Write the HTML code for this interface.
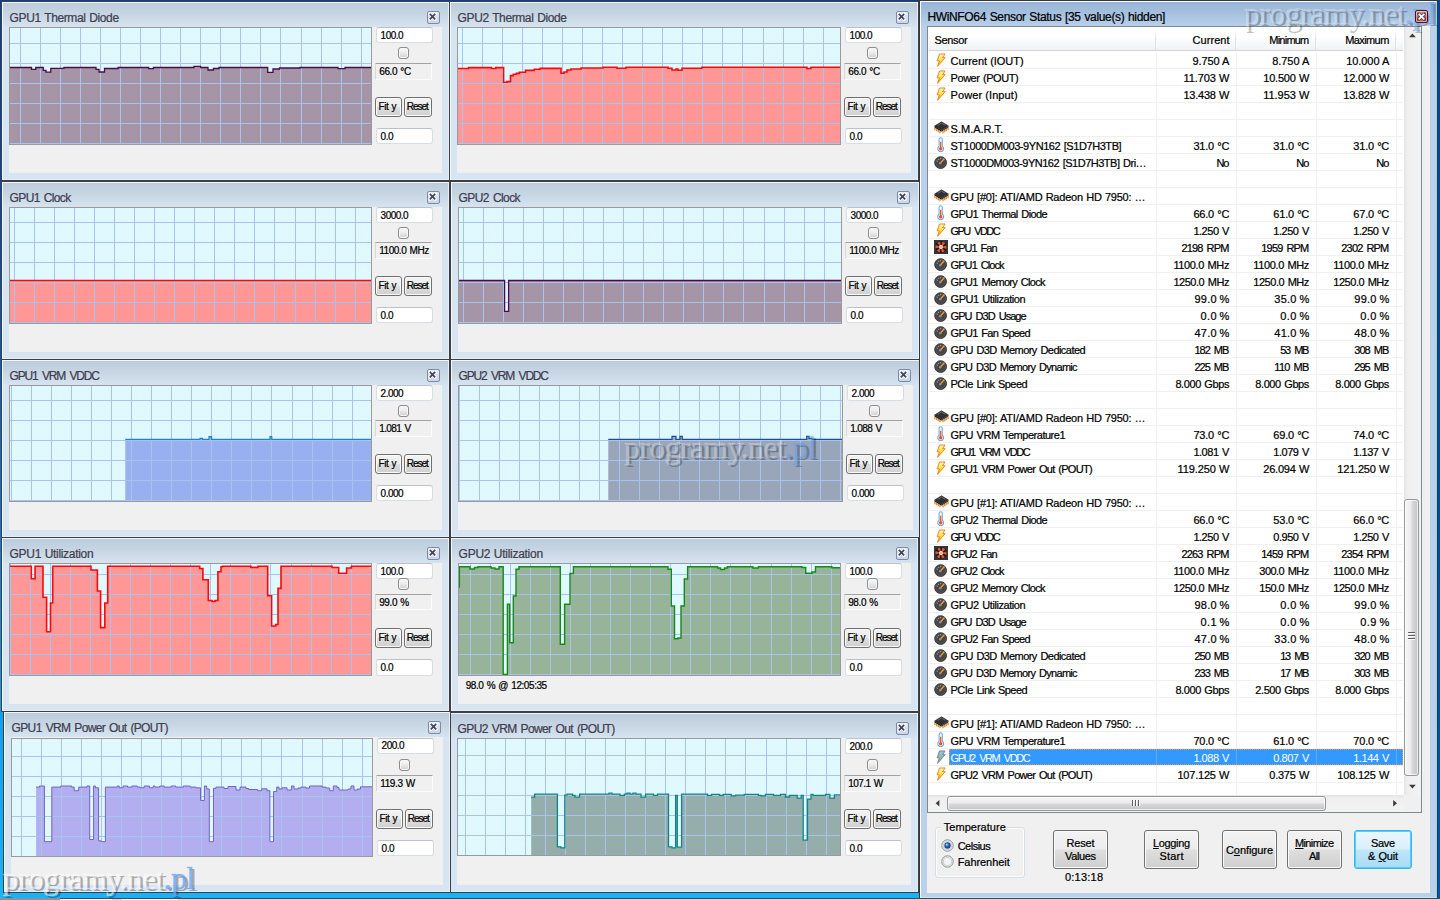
<!DOCTYPE html>
<html lang="en"><head><meta charset="utf-8"><title>HWiNFO64 Sensor Status</title>
<style>
html,body{margin:0;padding:0}
body{width:1440px;height:900px;overflow:hidden;position:relative;font-family:"Liberation Sans",sans-serif;
 background:linear-gradient(180deg,#0a3f9a 0px,#0b4bb0 250px,#0f74da 520px,#12a0f2 720px,#18b2f6 890px,#18b2f6 900px)}
.t{position:absolute;white-space:pre;font-family:"Liberation Sans",sans-serif;line-height:16px;-webkit-text-stroke:.22px currentColor}
.a{position:absolute;box-sizing:border-box}
.win{position:absolute;box-sizing:border-box;border:1px solid #3d3f43;background:#d7e4f2}
.win .hl{position:absolute;left:0;top:0;right:0;bottom:0;box-sizing:border-box;border:1px solid #f3f7fb;border-right-color:#e6eef7;border-bottom-color:#e6eef7}
.win .tb{position:absolute;left:1px;right:1px;top:1px;height:25px;background:linear-gradient(180deg,#bbccdc 0,#c7d5e3 42%,#d7e4f2 100%)}
.cli{position:absolute;background:#f0f0f0}
.cb{position:absolute;box-sizing:border-box;width:13px;height:13px;border:1px solid #7f8aab;border-radius:2px;background:linear-gradient(180deg,#e4ebf5,#c9d5e6)}
.cb svg{position:absolute;left:0;top:0}
.gr{position:absolute;box-sizing:border-box;border:1px solid #9a9a9c;background:#e0f8ff;overflow:hidden}
.inp{position:absolute;box-sizing:border-box;background:#fff;border:1px solid #d6dde7;border-top-color:#bcc2cd;border-radius:3px}
.val{position:absolute;box-sizing:border-box;background:#f0f0f0;border:1px solid #fafcff;border-top-color:#a3a3a3;border-left-color:#d9d9d9;border-radius:1px}
.chk{position:absolute;box-sizing:border-box;border:1px solid #8a8c8e;border-radius:3px;background:linear-gradient(180deg,#f6f6f6 0,#efefef 40%,#cfcfcf 100%);box-shadow:inset 0 0 0 1px #f8f8f8}
.btn{position:absolute;box-sizing:border-box;border:1px solid #707070;border-radius:3px;background:linear-gradient(180deg,#f3f3f3 0,#ececec 48%,#dedede 52%,#cfcfcf 100%);box-shadow:inset 0 0 0 1px #fbfbfb}
.btn.def{border-color:#3cb4ee;background:linear-gradient(180deg,#ecf6fd 0,#d9f0fc 48%,#bfe6fa 52%,#a9dbf6 100%);box-shadow:inset 0 0 0 1px #4fd0fb}
u{text-decoration:underline;text-underline-offset:1px}
.wm{position:absolute;font-family:"Liberation Serif",serif;white-space:pre}
</style></head><body>
<svg width="0" height="0" style="position:absolute"><defs>
<linearGradient id="gb" x1="0" y1="0" x2="0" y2="1"><stop offset="0" stop-color="#fffac8"/><stop offset=".5" stop-color="#ffe534"/><stop offset="1" stop-color="#f9a31a"/></linearGradient>
<symbol id="bolt" viewBox="0 0 12 16"><path d="M4.2 .8 L10.8 .8 L8 5.2 L11 5.2 L1.8 15.6 L4.2 9 L1.4 9 Z" fill="url(#gb)" stroke="#ee7414" stroke-width="1.05" stroke-linejoin="round"/></symbol>
<symbol id="bolts" viewBox="0 0 12 16"><path d="M4.2 .8 L10.8 .8 L8 5.2 L11 5.2 L1.8 15.6 L4.2 9 L1.4 9 Z" fill="url(#gb)" stroke="#ee7414" stroke-width="1.05" stroke-linejoin="round"/><path d="M4.2 .8 L10.8 .8 L8 5.2 L11 5.2 L1.8 15.6 L4.2 9 L1.4 9 Z" fill="#3399ff" fill-opacity=".55" stroke="#3399ff" stroke-opacity=".55" stroke-width="1.05" stroke-linejoin="round"/></symbol>
<symbol id="chip" viewBox="0 0 16 14"><path d="M1 7.2 v2.6 M2.8 8.3 v2.6 M4.6 9.4 v2.6 M6.4 10.5 v2.6 M9.6 10.5 v2.6 M11.4 9.4 v2.6 M13.2 8.3 v2.6 M15 7.2 v2.6" stroke="#f28a22" stroke-width="1.4"/><path d="M8 .8 L15.4 5.3 L8 9.8 L.6 5.3 Z" fill="#303030" stroke="#1c1c1c" stroke-width=".6"/><path d="M.6 5.3 L8 9.8 L8 11.4 L.6 6.9 Z" fill="#1e1e1e"/><path d="M15.4 5.3 L8 9.8 L8 11.4 L15.4 6.9 Z" fill="#3c3c3c"/><path d="M4 4.6 L8 2.2 L12 4.6" stroke="#7d7d7d" stroke-width=".8" fill="none"/></symbol>
<symbol id="therm" viewBox="0 0 10 16"><path d="M3.3 2.4 a1.7 1.7 0 0 1 3.4 0 V9.8 a3.1 3.1 0 1 1 -3.4 0 Z" fill="#fbfdff" stroke="#6ea5df" stroke-width="1.1"/><circle cx="5" cy="12.4" r="1.9" fill="#f2561a"/><rect x="4.3" y="5" width="1.4" height="7" fill="#f2561a"/></symbol>
<symbol id="gauge" viewBox="0 0 14 14"><circle cx="7" cy="7" r="6.3" fill="#454545" stroke="#2a2a2a" stroke-width=".9"/><circle cx="7" cy="7" r="5" fill="none" stroke="#5c5c5c" stroke-width=".8"/><path d="M3 5.2 l.9 .5 M4.6 3.2 l.6 .8 M7 2.4 v1 " stroke="#d8d8d8" stroke-width=".9"/><path d="M6.6 7.6 L10.6 3.2" stroke="#f39a32" stroke-width="1.5" stroke-linecap="round"/><circle cx="6.6" cy="7.6" r="1.3" fill="#8c8c8c"/></symbol>
<symbol id="fan" viewBox="0 0 14 14"><rect x=".4" y=".4" width="13.2" height="13.2" fill="#33343c" stroke="#23242a" stroke-width=".8"/><circle cx="7" cy="7" r="5.9" fill="#15151a"/><g fill="#d9582d"><path d="M7 7 L3.2 2.9 A5.6 5.6 0 0 1 6.2 1.5 Z"/><path d="M7 7 L8.4 1.6 A5.6 5.6 0 0 1 11.4 3.5 Z"/><path d="M7 7 L12.4 5.4 A5.6 5.6 0 0 1 12.3 9 Z"/><path d="M7 7 L10.9 11 A5.6 5.6 0 0 1 7.8 12.5 Z"/><path d="M7 7 L5.6 12.4 A5.6 5.6 0 0 1 2.7 10.6 Z"/><path d="M7 7 L1.6 8.6 A5.6 5.6 0 0 1 1.7 5 Z"/></g><circle cx="7" cy="7" r="1.9" fill="#f6f2f2"/><circle cx="7" cy="7" r=".7" fill="#e8473a"/></symbol>
<symbol id="xx" viewBox="0 0 13 13"><path d="M3.5 3.6 L9.5 9.6 M9.5 3.6 L3.5 9.6" stroke="#fff" stroke-width="4" stroke-linecap="round"/><path d="M3.3 3.4 L9.7 9.8 M9.7 3.4 L3.3 9.8" stroke="#3f455c" stroke-width="2.1" stroke-linecap="butt"/></symbol>
</defs></svg>

<div class="win" style="left:1px;top:1px;width:449px;height:180px"><div class="tb"></div><div class="hl"></div></div>
<div class="cli" style="left:9px;top:27px;width:433px;height:146px"></div>
<span class="t" style="left:9.60px;top:10px;font-size:12px;letter-spacing:-0.385px;word-spacing:0.769px;color:#3e3d4e;">GPU1 Thermal Diode</span>
<div class="cb" style="left:427px;top:11px"><svg width="11" height="11" viewBox="1 1 11 11"><use href="#xx"/></svg></div>
<div class="gr" style="left:9px;top:27px;width:363px;height:118px"><svg width="361" height="116" viewBox="10 28 361 116" style="position:absolute;left:0;top:0"><path d="M10.0 67.5 L31.5 67.5 L31.5 69.3 L35.8 69.3 L35.8 67.5 L43.3 67.5 L43.3 70.3 L46.0 70.3 L46.0 72.2 L50.8 72.2 L50.8 68.3 L64.0 68.3 L64.0 67.5 L91.0 67.5 L91.0 67.5 L96.0 67.5 L96.0 69.3 L99.0 69.3 L99.0 72.0 L104.5 72.0 L104.5 68.5 L118.0 68.5 L118.0 67.5 L148.6 67.5 L148.6 68.6 L153.4 68.6 L153.4 67.5 L194.0 67.5 L194.0 66.3 L200.6 66.3 L200.6 67.5 L208.0 67.5 L208.0 70.0 L213.4 70.0 L213.4 68.5 L219.0 68.5 L219.0 67.5 L267.7 67.5 L267.7 72.3 L273.0 72.3 L273.0 69.0 L279.5 69.0 L279.5 68.0 L300.0 68.0 L300.0 67.5 L338.0 67.5 L338.0 68.6 L345.0 68.6 L345.0 67.5 L372.0 67.5 L372.0 145.0 L10.0 145.0 Z" fill="#a595a7"/><path d="M20.5 28V144M40.5 28V144M60.5 28V144M80.5 28V144M100.5 28V144M120.5 28V144M140.5 28V144M160.5 28V144M180.5 28V144M200.5 28V144M220.5 28V144M240.5 28V144M260.5 28V144M280.5 28V144M301.5 28V144M321.5 28V144M341.5 28V144M361.5 28V144M10 43.5H371M10 63.5H371M10 83.5H371M10 103.5H371M10 123.5H371M10 143.5H371" stroke="#a7c3ee" stroke-width="1" fill="none" shape-rendering="crispEdges"/><path d="M10.0 67.5 L31.5 67.5 L31.5 69.3 L35.8 69.3 L35.8 67.5 L43.3 67.5 L43.3 70.3 L46.0 70.3 L46.0 72.2 L50.8 72.2 L50.8 68.3 L64.0 68.3 L64.0 67.5 L91.0 67.5 L91.0 67.5 L96.0 67.5 L96.0 69.3 L99.0 69.3 L99.0 72.0 L104.5 72.0 L104.5 68.5 L118.0 68.5 L118.0 67.5 L148.6 67.5 L148.6 68.6 L153.4 68.6 L153.4 67.5 L194.0 67.5 L194.0 66.3 L200.6 66.3 L200.6 67.5 L208.0 67.5 L208.0 70.0 L213.4 70.0 L213.4 68.5 L219.0 68.5 L219.0 67.5 L267.7 67.5 L267.7 72.3 L273.0 72.3 L273.0 69.0 L279.5 69.0 L279.5 68.0 L300.0 68.0 L300.0 67.5 L338.0 67.5 L338.0 68.6 L345.0 68.6 L345.0 67.5 L372.0 67.5" fill="none" stroke="#4b0a4b" stroke-width="1.3" stroke-linejoin="miter"/></svg></div>
<div class="inp" style="left:375.5px;top:27.3px;width:57.5px;height:16px"></div>
<span class="t" style="left:380.60px;top:28px;font-size:10px;letter-spacing:-0.508px;word-spacing:1.016px;color:#000;">100.0</span>
<div class="chk" style="left:398px;top:47px;width:11px;height:12px"></div>
<div class="val" style="left:374.5px;top:63px;width:57px;height:17px"></div>
<span class="t" style="left:379.20px;top:64px;font-size:10px;letter-spacing:-0.367px;word-spacing:0.734px;color:#000;">66.0 °C</span>
<div class="btn" style="left:375px;top:97px;width:27px;height:20px"></div>
<span class="t" style="left:378.50px;top:99px;font-size:10px;letter-spacing:-0.445px;word-spacing:0.891px;color:#000;">Fit y</span>
<div class="btn" style="left:404px;top:97px;width:28px;height:20px"></div>
<span class="t" style="left:406.70px;top:99px;font-size:10px;letter-spacing:-1.031px;word-spacing:2.062px;color:#000;">Reset</span>
<div class="inp" style="left:375.5px;top:128px;width:57.5px;height:16.3px"></div>
<span class="t" style="left:380.60px;top:129px;font-size:10px;letter-spacing:-0.453px;word-spacing:0.906px;color:#000;">0.0</span>
<div class="win" style="left:449px;top:1px;width:470px;height:180px"><div class="tb"></div><div class="hl"></div></div>
<div class="cli" style="left:457px;top:27px;width:454px;height:146px"></div>
<span class="t" style="left:457.60px;top:10px;font-size:12px;letter-spacing:-0.400px;word-spacing:0.800px;color:#3e3d4e;">GPU2 Thermal Diode</span>
<div class="cb" style="left:896px;top:11px"><svg width="11" height="11" viewBox="1 1 11 11"><use href="#xx"/></svg></div>
<div class="gr" style="left:457px;top:27px;width:384px;height:118px"><svg width="382" height="116" viewBox="458 28 382 116" style="position:absolute;left:0;top:0"><path d="M458.0 68.5 L468.6 68.5 L468.6 67.6 L491.4 67.6 L491.4 68.5 L495.8 68.5 L495.8 67.6 L503.6 67.6 L503.6 82.3 L507.0 82.3 L507.0 81.6 L510.5 81.6 L510.5 75.6 L513.3 75.6 L513.3 74.3 L516.4 74.3 L516.4 73.4 L519.3 73.4 L519.3 72.3 L525.5 72.3 L525.5 70.4 L534.3 70.4 L534.3 69.3 L540.2 69.3 L540.2 68.4 L558.0 68.4 L558.0 68.3 L561.0 68.3 L561.0 73.3 L564.0 73.3 L564.0 72.0 L567.0 72.0 L567.0 70.0 L571.0 70.0 L571.0 69.0 L581.0 69.0 L581.0 68.0 L603.0 68.0 L603.0 67.3 L617.0 67.3 L617.0 68.3 L626.0 68.3 L626.0 67.3 L668.0 67.3 L668.0 68.3 L672.0 68.3 L672.0 70.0 L676.0 70.0 L676.0 69.0 L678.0 69.0 L678.0 70.3 L682.0 70.3 L682.0 68.3 L702.0 68.3 L702.0 67.3 L807.0 67.3 L807.0 68.5 L811.0 68.5 L811.0 67.3 L841.0 67.3 L841.0 145.0 L458.0 145.0 Z" fill="#ff9797"/><path d="M462.5 28V144M482.5 28V144M502.5 28V144M522.5 28V144M542.5 28V144M562.5 28V144M582.5 28V144M602.5 28V144M622.5 28V144M642.5 28V144M662.5 28V144M682.5 28V144M702.5 28V144M722.5 28V144M742.5 28V144M763.5 28V144M783.5 28V144M803.5 28V144M823.5 28V144M458 43.5H840M458 63.5H840M458 83.5H840M458 103.5H840M458 123.5H840M458 143.5H840" stroke="#a7c3ee" stroke-width="1" fill="none" shape-rendering="crispEdges"/><path d="M458.0 68.5 L468.6 68.5 L468.6 67.6 L491.4 67.6 L491.4 68.5 L495.8 68.5 L495.8 67.6 L503.6 67.6 L503.6 82.3 L507.0 82.3 L507.0 81.6 L510.5 81.6 L510.5 75.6 L513.3 75.6 L513.3 74.3 L516.4 74.3 L516.4 73.4 L519.3 73.4 L519.3 72.3 L525.5 72.3 L525.5 70.4 L534.3 70.4 L534.3 69.3 L540.2 69.3 L540.2 68.4 L558.0 68.4 L558.0 68.3 L561.0 68.3 L561.0 73.3 L564.0 73.3 L564.0 72.0 L567.0 72.0 L567.0 70.0 L571.0 70.0 L571.0 69.0 L581.0 69.0 L581.0 68.0 L603.0 68.0 L603.0 67.3 L617.0 67.3 L617.0 68.3 L626.0 68.3 L626.0 67.3 L668.0 67.3 L668.0 68.3 L672.0 68.3 L672.0 70.0 L676.0 70.0 L676.0 69.0 L678.0 69.0 L678.0 70.3 L682.0 70.3 L682.0 68.3 L702.0 68.3 L702.0 67.3 L807.0 67.3 L807.0 68.5 L811.0 68.5 L811.0 67.3 L841.0 67.3" fill="none" stroke="#fb0808" stroke-width="1.6" stroke-linejoin="miter"/></svg></div>
<div class="inp" style="left:844.5px;top:27.3px;width:57.5px;height:16px"></div>
<span class="t" style="left:849.60px;top:28px;font-size:10px;letter-spacing:-0.508px;word-spacing:1.016px;color:#000;">100.0</span>
<div class="chk" style="left:867px;top:47px;width:11px;height:12px"></div>
<div class="val" style="left:843.5px;top:63px;width:57px;height:17px"></div>
<span class="t" style="left:848.20px;top:64px;font-size:10px;letter-spacing:-0.367px;word-spacing:0.734px;color:#000;">66.0 °C</span>
<div class="btn" style="left:844px;top:97px;width:27px;height:20px"></div>
<span class="t" style="left:847.50px;top:99px;font-size:10px;letter-spacing:-0.445px;word-spacing:0.891px;color:#000;">Fit y</span>
<div class="btn" style="left:873px;top:97px;width:28px;height:20px"></div>
<span class="t" style="left:875.70px;top:99px;font-size:10px;letter-spacing:-1.031px;word-spacing:2.062px;color:#000;">Reset</span>
<div class="inp" style="left:844.5px;top:128px;width:57.5px;height:16.3px"></div>
<span class="t" style="left:849.60px;top:129px;font-size:10px;letter-spacing:-0.453px;word-spacing:0.906px;color:#000;">0.0</span>
<div class="win" style="left:1px;top:181px;width:449px;height:179px"><div class="tb"></div><div class="hl"></div></div>
<div class="cli" style="left:9px;top:207px;width:433px;height:145px"></div>
<span class="t" style="left:9.60px;top:190px;font-size:12px;letter-spacing:-0.633px;word-spacing:1.266px;color:#3e3d4e;">GPU1 Clock</span>
<div class="cb" style="left:427px;top:191px"><svg width="11" height="11" viewBox="1 1 11 11"><use href="#xx"/></svg></div>
<div class="gr" style="left:9px;top:207px;width:363px;height:117px"><svg width="361" height="115" viewBox="10 208 361 115" style="position:absolute;left:0;top:0"><path d="M10.0 280.5 L372.0 280.5 L372.0 324.0 L10.0 324.0 Z" fill="#ff9797"/><path d="M14.5 208V323M34.5 208V323M54.5 208V323M74.5 208V323M94.5 208V323M114.5 208V323M134.5 208V323M154.5 208V323M174.5 208V323M194.5 208V323M214.5 208V323M234.5 208V323M254.5 208V323M274.5 208V323M295.5 208V323M315.5 208V323M335.5 208V323M355.5 208V323M10 222.5H371M10 242.5H371M10 262.5H371M10 282.5H371M10 302.5H371M10 322.5H371" stroke="#a7c3ee" stroke-width="1" fill="none" shape-rendering="crispEdges"/><path d="M10.0 280.5 L372.0 280.5" fill="none" stroke="#fb0808" stroke-width="1.6" stroke-linejoin="miter"/></svg></div>
<div class="inp" style="left:375.5px;top:207.2px;width:57.5px;height:16px"></div>
<span class="t" style="left:380.60px;top:208px;font-size:10px;letter-spacing:-0.519px;word-spacing:1.038px;color:#000;">3000.0</span>
<div class="chk" style="left:398px;top:226.5px;width:11px;height:12px"></div>
<div class="val" style="left:374.5px;top:242px;width:57px;height:17px"></div>
<span class="t" style="left:379.20px;top:243px;font-size:10px;letter-spacing:-0.455px;word-spacing:0.911px;color:#000;">1100.0 MHz</span>
<div class="btn" style="left:375px;top:276.3px;width:27px;height:20px"></div>
<span class="t" style="left:378.50px;top:278px;font-size:10px;letter-spacing:-0.445px;word-spacing:0.891px;color:#000;">Fit y</span>
<div class="btn" style="left:404px;top:276.3px;width:28px;height:20px"></div>
<span class="t" style="left:406.70px;top:278px;font-size:10px;letter-spacing:-1.031px;word-spacing:2.062px;color:#000;">Reset</span>
<div class="inp" style="left:375.5px;top:307px;width:57.5px;height:16.3px"></div>
<span class="t" style="left:380.60px;top:308px;font-size:10px;letter-spacing:-0.453px;word-spacing:0.906px;color:#000;">0.0</span>
<div class="win" style="left:450px;top:181px;width:470px;height:179px"><div class="tb"></div><div class="hl"></div></div>
<div class="cli" style="left:458px;top:207px;width:454px;height:145px"></div>
<span class="t" style="left:458.60px;top:190px;font-size:12px;letter-spacing:-0.576px;word-spacing:1.152px;color:#3e3d4e;">GPU2 Clock</span>
<div class="cb" style="left:897px;top:191px"><svg width="11" height="11" viewBox="1 1 11 11"><use href="#xx"/></svg></div>
<div class="gr" style="left:458px;top:207px;width:384px;height:117px"><svg width="382" height="115" viewBox="459 208 382 115" style="position:absolute;left:0;top:0"><path d="M459.0 280.5 L504.6 280.5 L504.6 311.3 L508.6 311.3 L508.6 280.5 L842.0 280.5 L842.0 324.0 L459.0 324.0 Z" fill="#a595a7"/><path d="M463.5 208V323M483.5 208V323M503.5 208V323M523.5 208V323M543.5 208V323M563.5 208V323M583.5 208V323M603.5 208V323M623.5 208V323M643.5 208V323M663.5 208V323M683.5 208V323M703.5 208V323M723.5 208V323M743.5 208V323M764.5 208V323M784.5 208V323M804.5 208V323M824.5 208V323M459 222.5H841M459 242.5H841M459 262.5H841M459 282.5H841M459 302.5H841M459 322.5H841" stroke="#a7c3ee" stroke-width="1" fill="none" shape-rendering="crispEdges"/><path d="M459.0 280.5 L504.6 280.5 L504.6 311.3 L508.6 311.3 L508.6 280.5 L842.0 280.5" fill="none" stroke="#4b0a4b" stroke-width="1.3" stroke-linejoin="miter"/></svg></div>
<div class="inp" style="left:845.5px;top:207.2px;width:57.5px;height:16px"></div>
<span class="t" style="left:850.60px;top:208px;font-size:10px;letter-spacing:-0.519px;word-spacing:1.038px;color:#000;">3000.0</span>
<div class="chk" style="left:868px;top:226.5px;width:11px;height:12px"></div>
<div class="val" style="left:844.5px;top:242px;width:57px;height:17px"></div>
<span class="t" style="left:849.20px;top:243px;font-size:10px;letter-spacing:-0.455px;word-spacing:0.911px;color:#000;">1100.0 MHz</span>
<div class="btn" style="left:845px;top:276.3px;width:27px;height:20px"></div>
<span class="t" style="left:848.50px;top:278px;font-size:10px;letter-spacing:-0.445px;word-spacing:0.891px;color:#000;">Fit y</span>
<div class="btn" style="left:874px;top:276.3px;width:28px;height:20px"></div>
<span class="t" style="left:876.70px;top:278px;font-size:10px;letter-spacing:-1.031px;word-spacing:2.062px;color:#000;">Reset</span>
<div class="inp" style="left:845.5px;top:307px;width:57.5px;height:16.3px"></div>
<span class="t" style="left:850.60px;top:308px;font-size:10px;letter-spacing:-0.453px;word-spacing:0.906px;color:#000;">0.0</span>
<div class="win" style="left:1px;top:359px;width:449px;height:179px"><div class="tb"></div><div class="hl"></div></div>
<div class="cli" style="left:9px;top:385px;width:433px;height:145px"></div>
<span class="t" style="left:9.60px;top:368px;font-size:12px;letter-spacing:-1.227px;word-spacing:2.454px;color:#3e3d4e;">GPU1 VRM VDDC</span>
<div class="cb" style="left:427px;top:369px"><svg width="11" height="11" viewBox="1 1 11 11"><use href="#xx"/></svg></div>
<div class="gr" style="left:9px;top:385px;width:363px;height:117px"><svg width="361" height="115" viewBox="10 386 361 115" style="position:absolute;left:0;top:0"><path d="M125.3 439.4 L200.0 439.4 L200.0 438.4 L202.5 438.4 L202.5 439.4 L209.0 439.4 L209.0 436.6 L211.6 436.6 L211.6 439.4 L270.0 439.4 L270.0 436.6 L271.8 436.6 L271.8 439.4 L372.0 439.4 L372.0 502.0 L125.3 502.0 Z" fill="#98aff0"/><path d="M11.5 386V501M31.5 386V501M51.5 386V501M71.5 386V501M91.5 386V501M111.5 386V501M131.5 386V501M151.5 386V501M171.5 386V501M191.5 386V501M211.5 386V501M231.5 386V501M251.5 386V501M271.5 386V501M292.5 386V501M312.5 386V501M332.5 386V501M352.5 386V501M10 400.5H371M10 420.5H371M10 440.5H371M10 460.5H371M10 480.5H371M10 500.5H371" stroke="#a7c3ee" stroke-width="1" fill="none" shape-rendering="crispEdges"/><path d="M125.3 439.4 L200.0 439.4 L200.0 438.4 L202.5 438.4 L202.5 439.4 L209.0 439.4 L209.0 436.6 L211.6 436.6 L211.6 439.4 L270.0 439.4 L270.0 436.6 L271.8 436.6 L271.8 439.4 L372.0 439.4" fill="none" stroke="#1f86c4" stroke-width="1.2" stroke-linejoin="miter"/></svg></div>
<div class="inp" style="left:375.5px;top:385.2px;width:57.5px;height:16px"></div>
<span class="t" style="left:380.60px;top:386px;font-size:10px;letter-spacing:-0.508px;word-spacing:1.016px;color:#000;">2.000</span>
<div class="chk" style="left:398px;top:404.5px;width:11px;height:12px"></div>
<div class="val" style="left:374.5px;top:420px;width:57px;height:17px"></div>
<span class="t" style="left:379.20px;top:421px;font-size:10px;letter-spacing:-0.621px;word-spacing:1.242px;color:#000;">1.081 V</span>
<div class="btn" style="left:375px;top:454.3px;width:27px;height:20px"></div>
<span class="t" style="left:378.50px;top:456px;font-size:10px;letter-spacing:-0.445px;word-spacing:0.891px;color:#000;">Fit y</span>
<div class="btn" style="left:404px;top:454.3px;width:28px;height:20px"></div>
<span class="t" style="left:406.70px;top:456px;font-size:10px;letter-spacing:-1.031px;word-spacing:2.062px;color:#000;">Reset</span>
<div class="inp" style="left:375.5px;top:485px;width:57.5px;height:16.3px"></div>
<span class="t" style="left:380.60px;top:486px;font-size:10px;letter-spacing:-0.508px;word-spacing:1.016px;color:#000;">0.000</span>
<div class="win" style="left:450px;top:359px;width:471px;height:179px"><div class="tb"></div><div class="hl"></div></div>
<div class="cli" style="left:458px;top:385px;width:455px;height:145px"></div>
<span class="t" style="left:458.60px;top:368px;font-size:12px;letter-spacing:-1.202px;word-spacing:2.404px;color:#3e3d4e;">GPU2 VRM VDDC</span>
<div class="cb" style="left:898px;top:369px"><svg width="11" height="11" viewBox="1 1 11 11"><use href="#xx"/></svg></div>
<div class="gr" style="left:458px;top:385px;width:385px;height:117px"><svg width="383" height="115" viewBox="459 386 383 115" style="position:absolute;left:0;top:0"><path d="M608.3 439.3 L672.0 439.3 L672.0 436.4 L676.0 436.4 L676.0 439.3 L680.0 439.3 L680.0 436.4 L682.3 436.4 L682.3 439.3 L806.7 439.3 L806.7 436.4 L809.0 436.4 L809.0 438.3 L812.0 438.3 L812.0 439.3 L843.0 439.3 L843.0 502.0 L608.3 502.0 Z" fill="#99a5b9"/><path d="M459.5 386V501M479.5 386V501M499.5 386V501M519.5 386V501M539.5 386V501M559.5 386V501M579.5 386V501M599.5 386V501M619.5 386V501M639.5 386V501M659.5 386V501M679.5 386V501M699.5 386V501M719.5 386V501M739.5 386V501M760.5 386V501M780.5 386V501M800.5 386V501M820.5 386V501M840.5 386V501M459 400.5H842M459 420.5H842M459 440.5H842M459 460.5H842M459 480.5H842M459 500.5H842" stroke="#a7c3ee" stroke-width="1" fill="none" shape-rendering="crispEdges"/><path d="M608.3 439.3 L672.0 439.3 L672.0 436.4 L676.0 436.4 L676.0 439.3 L680.0 439.3 L680.0 436.4 L682.3 436.4 L682.3 439.3 L806.7 439.3 L806.7 436.4 L809.0 436.4 L809.0 438.3 L812.0 438.3 L812.0 439.3 L843.0 439.3" fill="none" stroke="#1c4f93" stroke-width="1.2" stroke-linejoin="miter"/></svg></div>
<div class="inp" style="left:846.5px;top:385.2px;width:57.5px;height:16px"></div>
<span class="t" style="left:851.60px;top:386px;font-size:10px;letter-spacing:-0.508px;word-spacing:1.016px;color:#000;">2.000</span>
<div class="chk" style="left:869px;top:404.5px;width:11px;height:12px"></div>
<div class="val" style="left:845.5px;top:420px;width:57px;height:17px"></div>
<span class="t" style="left:850.20px;top:421px;font-size:10px;letter-spacing:-0.621px;word-spacing:1.242px;color:#000;">1.088 V</span>
<div class="btn" style="left:846px;top:454.3px;width:27px;height:20px"></div>
<span class="t" style="left:849.50px;top:456px;font-size:10px;letter-spacing:-0.445px;word-spacing:0.891px;color:#000;">Fit y</span>
<div class="btn" style="left:875px;top:454.3px;width:28px;height:20px"></div>
<span class="t" style="left:877.70px;top:456px;font-size:10px;letter-spacing:-1.031px;word-spacing:2.062px;color:#000;">Reset</span>
<div class="inp" style="left:846.5px;top:485px;width:57.5px;height:16.3px"></div>
<span class="t" style="left:851.60px;top:486px;font-size:10px;letter-spacing:-0.508px;word-spacing:1.016px;color:#000;">0.000</span>
<div class="win" style="left:1px;top:537px;width:449px;height:175px"><div class="tb"></div><div class="hl"></div></div>
<div class="cli" style="left:9px;top:563px;width:433px;height:141px"></div>
<span class="t" style="left:9.60px;top:546px;font-size:12px;letter-spacing:-0.310px;word-spacing:0.620px;color:#3e3d4e;">GPU1 Utilization</span>
<div class="cb" style="left:427px;top:547px"><svg width="11" height="11" viewBox="1 1 11 11"><use href="#xx"/></svg></div>
<div class="gr" style="left:9px;top:563px;width:363px;height:113px"><svg width="361" height="111" viewBox="10 564 361 111" style="position:absolute;left:0;top:0"><path d="M10.0 566.3 L31.3 566.3 L31.3 578.8 L35.1 578.8 L35.1 566.3 L43.0 566.3 L43.0 597.3 L46.6 597.3 L46.6 631.8 L50.5 631.8 L50.5 603.0 L52.7 603.0 L52.7 566.3 L91.0 566.3 L91.0 570.0 L97.4 570.0 L97.4 591.0 L100.6 591.0 L100.6 627.6 L104.8 627.6 L104.8 603.0 L107.7 603.0 L107.7 566.3 L199.7 566.3 L199.7 568.5 L202.9 568.5 L202.9 579.7 L208.3 579.7 L208.3 600.5 L212.0 600.5 L212.0 601.5 L215.0 601.5 L215.0 600.5 L217.9 600.5 L217.9 571.7 L221.0 571.7 L221.0 566.8 L222.5 566.8 L222.5 566.3 L250.8 566.3 L250.8 567.4 L258.0 567.4 L258.0 566.3 L267.7 566.3 L267.7 595.7 L271.6 595.7 L271.6 626.0 L275.7 626.0 L275.7 624.5 L278.0 624.5 L278.0 588.4 L281.0 588.4 L281.0 566.3 L332.0 566.3 L332.0 567.5 L338.7 567.5 L338.7 573.3 L346.6 573.3 L346.6 568.0 L351.4 568.0 L351.4 566.3 L372.0 566.3 L372.0 676.0 L10.0 676.0 Z" fill="#ff9797"/><path d="M10.5 564V675M30.5 564V675M50.5 564V675M70.5 564V675M90.5 564V675M110.5 564V675M130.5 564V675M150.5 564V675M170.5 564V675M190.5 564V675M210.5 564V675M230.5 564V675M250.5 564V675M270.5 564V675M291.5 564V675M311.5 564V675M331.5 564V675M351.5 564V675M371.5 564V675M10 574.5H371M10 594.5H371M10 614.5H371M10 634.5H371M10 654.5H371M10 674.5H371" stroke="#a7c3ee" stroke-width="1" fill="none" shape-rendering="crispEdges"/><path d="M10.0 566.3 L31.3 566.3 L31.3 578.8 L35.1 578.8 L35.1 566.3 L43.0 566.3 L43.0 597.3 L46.6 597.3 L46.6 631.8 L50.5 631.8 L50.5 603.0 L52.7 603.0 L52.7 566.3 L91.0 566.3 L91.0 570.0 L97.4 570.0 L97.4 591.0 L100.6 591.0 L100.6 627.6 L104.8 627.6 L104.8 603.0 L107.7 603.0 L107.7 566.3 L199.7 566.3 L199.7 568.5 L202.9 568.5 L202.9 579.7 L208.3 579.7 L208.3 600.5 L212.0 600.5 L212.0 601.5 L215.0 601.5 L215.0 600.5 L217.9 600.5 L217.9 571.7 L221.0 571.7 L221.0 566.8 L222.5 566.8 L222.5 566.3 L250.8 566.3 L250.8 567.4 L258.0 567.4 L258.0 566.3 L267.7 566.3 L267.7 595.7 L271.6 595.7 L271.6 626.0 L275.7 626.0 L275.7 624.5 L278.0 624.5 L278.0 588.4 L281.0 588.4 L281.0 566.3 L332.0 566.3 L332.0 567.5 L338.7 567.5 L338.7 573.3 L346.6 573.3 L346.6 568.0 L351.4 568.0 L351.4 566.3 L372.0 566.3" fill="none" stroke="#fb0808" stroke-width="1.6" stroke-linejoin="miter"/></svg></div>
<div class="inp" style="left:375.5px;top:563.4px;width:57.5px;height:16px"></div>
<span class="t" style="left:380.60px;top:564px;font-size:10px;letter-spacing:-0.508px;word-spacing:1.016px;color:#000;">100.0</span>
<div class="chk" style="left:398px;top:578px;width:11px;height:12px"></div>
<div class="val" style="left:374.5px;top:594px;width:57px;height:16px"></div>
<span class="t" style="left:379.20px;top:595px;font-size:10px;letter-spacing:-0.380px;word-spacing:0.760px;color:#000;">99.0 %</span>
<div class="btn" style="left:375px;top:628px;width:27px;height:20px"></div>
<span class="t" style="left:378.50px;top:630px;font-size:10px;letter-spacing:-0.445px;word-spacing:0.891px;color:#000;">Fit y</span>
<div class="btn" style="left:404px;top:628px;width:28px;height:20px"></div>
<span class="t" style="left:406.70px;top:630px;font-size:10px;letter-spacing:-1.031px;word-spacing:2.062px;color:#000;">Reset</span>
<div class="inp" style="left:375.5px;top:659.3px;width:57.5px;height:16.3px"></div>
<span class="t" style="left:380.60px;top:660px;font-size:10px;letter-spacing:-0.453px;word-spacing:0.906px;color:#000;">0.0</span>
<div class="win" style="left:450px;top:537px;width:469px;height:175px"><div class="tb"></div><div class="hl"></div></div>
<div class="cli" style="left:458px;top:563px;width:453px;height:141px"></div>
<span class="t" style="left:458.60px;top:546px;font-size:12px;letter-spacing:-0.272px;word-spacing:0.543px;color:#3e3d4e;">GPU2 Utilization</span>
<div class="cb" style="left:896px;top:547px"><svg width="11" height="11" viewBox="1 1 11 11"><use href="#xx"/></svg></div>
<div class="gr" style="left:458px;top:563px;width:383px;height:113px"><svg width="381" height="111" viewBox="459 564 381 111" style="position:absolute;left:0;top:0"><path d="M458.6 587.0 L459.4 587.0 L459.4 566.7 L470.0 566.7 L470.0 569.0 L474.5 569.0 L474.5 567.5 L478.0 567.5 L478.0 566.7 L491.0 566.7 L491.0 568.0 L495.0 568.0 L495.0 569.0 L499.0 569.0 L499.0 566.7 L503.2 566.7 L503.2 674.4 L507.4 674.4 L507.4 604.2 L509.7 604.2 L509.7 642.7 L513.3 642.7 L513.3 596.0 L516.0 596.0 L516.0 569.3 L519.0 569.3 L519.0 566.7 L560.3 566.7 L560.3 644.3 L564.6 644.3 L564.6 604.2 L570.0 604.2 L570.0 573.5 L573.4 573.5 L573.4 566.7 L668.0 566.7 L668.0 569.3 L671.3 569.3 L671.3 606.0 L674.5 606.0 L674.5 638.8 L678.0 638.8 L678.0 638.0 L681.0 638.0 L681.0 606.0 L684.3 606.0 L684.3 579.0 L687.6 579.0 L687.6 566.7 L717.6 566.7 L717.6 568.0 L720.5 568.0 L720.5 569.5 L724.5 569.5 L724.5 568.0 L727.4 568.0 L727.4 566.7 L752.9 566.7 L752.9 568.0 L758.4 568.0 L758.4 566.7 L802.0 566.7 L802.0 567.5 L805.7 567.5 L805.7 573.2 L812.0 573.2 L812.0 572.0 L815.5 572.0 L815.5 566.7 L831.8 566.7 L831.8 567.8 L841.0 567.8 L841.0 676.0 L458.6 676.0 Z" fill="#98b498"/><path d="M470.5 564V675M490.5 564V675M510.5 564V675M530.5 564V675M550.5 564V675M570.5 564V675M590.5 564V675M610.5 564V675M630.5 564V675M650.5 564V675M670.5 564V675M690.5 564V675M710.5 564V675M730.5 564V675M750.5 564V675M771.5 564V675M791.5 564V675M811.5 564V675M831.5 564V675M459 574.5H840M459 594.5H840M459 614.5H840M459 634.5H840M459 654.5H840M459 674.5H840" stroke="#a7c3ee" stroke-width="1" fill="none" shape-rendering="crispEdges"/><path d="M458.6 587.0 L459.4 587.0 L459.4 566.7 L470.0 566.7 L470.0 569.0 L474.5 569.0 L474.5 567.5 L478.0 567.5 L478.0 566.7 L491.0 566.7 L491.0 568.0 L495.0 568.0 L495.0 569.0 L499.0 569.0 L499.0 566.7 L503.2 566.7 L503.2 674.4 L507.4 674.4 L507.4 604.2 L509.7 604.2 L509.7 642.7 L513.3 642.7 L513.3 596.0 L516.0 596.0 L516.0 569.3 L519.0 569.3 L519.0 566.7 L560.3 566.7 L560.3 644.3 L564.6 644.3 L564.6 604.2 L570.0 604.2 L570.0 573.5 L573.4 573.5 L573.4 566.7 L668.0 566.7 L668.0 569.3 L671.3 569.3 L671.3 606.0 L674.5 606.0 L674.5 638.8 L678.0 638.8 L678.0 638.0 L681.0 638.0 L681.0 606.0 L684.3 606.0 L684.3 579.0 L687.6 579.0 L687.6 566.7 L717.6 566.7 L717.6 568.0 L720.5 568.0 L720.5 569.5 L724.5 569.5 L724.5 568.0 L727.4 568.0 L727.4 566.7 L752.9 566.7 L752.9 568.0 L758.4 568.0 L758.4 566.7 L802.0 566.7 L802.0 567.5 L805.7 567.5 L805.7 573.2 L812.0 573.2 L812.0 572.0 L815.5 572.0 L815.5 566.7 L831.8 566.7 L831.8 567.8 L841.0 567.8" fill="none" stroke="#168a16" stroke-width="1.4" stroke-linejoin="miter"/></svg></div>
<div class="inp" style="left:844.5px;top:563.4px;width:57.5px;height:16px"></div>
<span class="t" style="left:849.60px;top:564px;font-size:10px;letter-spacing:-0.508px;word-spacing:1.016px;color:#000;">100.0</span>
<div class="chk" style="left:867px;top:578px;width:11px;height:12px"></div>
<div class="val" style="left:843.5px;top:594px;width:57px;height:16px"></div>
<span class="t" style="left:848.20px;top:595px;font-size:10px;letter-spacing:-0.380px;word-spacing:0.760px;color:#000;">98.0 %</span>
<div class="btn" style="left:844px;top:628px;width:27px;height:20px"></div>
<span class="t" style="left:847.50px;top:630px;font-size:10px;letter-spacing:-0.445px;word-spacing:0.891px;color:#000;">Fit y</span>
<div class="btn" style="left:873px;top:628px;width:28px;height:20px"></div>
<span class="t" style="left:875.70px;top:630px;font-size:10px;letter-spacing:-1.031px;word-spacing:2.062px;color:#000;">Reset</span>
<div class="inp" style="left:844.5px;top:659.3px;width:57.5px;height:16.3px"></div>
<span class="t" style="left:849.60px;top:660px;font-size:10px;letter-spacing:-0.453px;word-spacing:0.906px;color:#000;">0.0</span>
<span class="t" style="left:465.70px;top:678px;font-size:10px;letter-spacing:-0.428px;word-spacing:0.856px;color:#000;">98.0 % @ 12:05:35</span>
<div class="win" style="left:449px;top:712px;width:470px;height:181px"><div class="tb"></div><div class="hl"></div></div>
<div class="cli" style="left:457px;top:738px;width:454px;height:147px"></div>
<span class="t" style="left:457.60px;top:721px;font-size:12px;letter-spacing:-0.611px;word-spacing:1.222px;color:#3e3d4e;">GPU2 VRM Power Out (POUT)</span>
<div class="cb" style="left:896px;top:722px"><svg width="11" height="11" viewBox="1 1 11 11"><use href="#xx"/></svg></div>
<div class="gr" style="left:457px;top:738.2px;width:384px;height:118px"><svg width="382" height="116" viewBox="458 739.2 382 116" style="position:absolute;left:0;top:0"><path d="M531.2 797.3 L534.6 797.3 L534.6 794.4 L557.4 794.4 L557.4 847.0 L561.0 847.0 L561.0 848.0 L564.8 848.0 L564.8 795.4 L567.0 795.4 L567.0 794.4 L572.5 794.4 L572.5 795.5 L575.0 795.5 L575.0 797.3 L579.6 797.3 L579.6 794.4 L609.0 794.4 L609.0 793.4 L612.0 793.4 L612.0 794.4 L620.0 794.4 L620.0 795.5 L624.4 795.5 L624.4 794.4 L627.0 794.4 L627.0 793.4 L630.0 793.4 L630.0 794.4 L633.0 794.4 L633.0 793.4 L636.0 793.4 L636.0 794.4 L641.0 794.4 L641.0 797.3 L645.6 797.3 L645.6 794.4 L653.5 794.4 L653.5 795.5 L657.5 795.5 L657.5 794.4 L668.5 794.4 L668.5 847.0 L672.0 847.0 L672.0 848.0 L675.6 848.0 L675.6 795.5 L677.3 795.5 L677.3 847.4 L681.6 847.4 L681.6 794.4 L707.5 794.4 L707.5 795.6 L711.6 795.6 L711.6 794.6 L719.6 794.6 L719.6 795.6 L723.2 795.6 L723.2 794.6 L731.2 794.6 L731.2 796.1 L735.7 796.1 L735.7 795.3 L744.3 795.3 L744.3 794.6 L758.4 794.6 L758.4 795.6 L761.0 795.6 L761.0 796.1 L765.5 796.1 L765.5 794.6 L773.5 794.6 L773.5 795.6 L780.5 795.6 L780.5 794.6 L785.4 794.6 L785.4 797.2 L789.6 797.2 L789.6 795.6 L797.2 795.6 L797.2 798.3 L801.2 798.3 L801.2 795.6 L803.2 795.6 L803.2 840.4 L807.5 840.4 L807.5 799.3 L811.0 799.3 L811.0 794.6 L813.0 794.6 L813.0 795.6 L825.6 795.6 L825.6 794.6 L829.9 794.6 L829.9 798.3 L834.4 798.3 L834.4 795.1 L841.0 795.1 L841.0 856.2 L531.2 856.2 Z" fill="#96aeab"/><path d="M465.5 739.2V855.2M485.5 739.2V855.2M505.5 739.2V855.2M525.5 739.2V855.2M545.5 739.2V855.2M565.5 739.2V855.2M585.5 739.2V855.2M605.5 739.2V855.2M625.5 739.2V855.2M645.5 739.2V855.2M665.5 739.2V855.2M685.5 739.2V855.2M705.5 739.2V855.2M725.5 739.2V855.2M745.5 739.2V855.2M766.5 739.2V855.2M786.5 739.2V855.2M806.5 739.2V855.2M826.5 739.2V855.2M458 755.5H840M458 775.5H840M458 795.5H840M458 815.5H840M458 835.5H840M458 855.5H840" stroke="#a7c3ee" stroke-width="1" fill="none" shape-rendering="crispEdges"/><path d="M531.2 797.3 L534.6 797.3 L534.6 794.4 L557.4 794.4 L557.4 847.0 L561.0 847.0 L561.0 848.0 L564.8 848.0 L564.8 795.4 L567.0 795.4 L567.0 794.4 L572.5 794.4 L572.5 795.5 L575.0 795.5 L575.0 797.3 L579.6 797.3 L579.6 794.4 L609.0 794.4 L609.0 793.4 L612.0 793.4 L612.0 794.4 L620.0 794.4 L620.0 795.5 L624.4 795.5 L624.4 794.4 L627.0 794.4 L627.0 793.4 L630.0 793.4 L630.0 794.4 L633.0 794.4 L633.0 793.4 L636.0 793.4 L636.0 794.4 L641.0 794.4 L641.0 797.3 L645.6 797.3 L645.6 794.4 L653.5 794.4 L653.5 795.5 L657.5 795.5 L657.5 794.4 L668.5 794.4 L668.5 847.0 L672.0 847.0 L672.0 848.0 L675.6 848.0 L675.6 795.5 L677.3 795.5 L677.3 847.4 L681.6 847.4 L681.6 794.4 L707.5 794.4 L707.5 795.6 L711.6 795.6 L711.6 794.6 L719.6 794.6 L719.6 795.6 L723.2 795.6 L723.2 794.6 L731.2 794.6 L731.2 796.1 L735.7 796.1 L735.7 795.3 L744.3 795.3 L744.3 794.6 L758.4 794.6 L758.4 795.6 L761.0 795.6 L761.0 796.1 L765.5 796.1 L765.5 794.6 L773.5 794.6 L773.5 795.6 L780.5 795.6 L780.5 794.6 L785.4 794.6 L785.4 797.2 L789.6 797.2 L789.6 795.6 L797.2 795.6 L797.2 798.3 L801.2 798.3 L801.2 795.6 L803.2 795.6 L803.2 840.4 L807.5 840.4 L807.5 799.3 L811.0 799.3 L811.0 794.6 L813.0 794.6 L813.0 795.6 L825.6 795.6 L825.6 794.6 L829.9 794.6 L829.9 798.3 L834.4 798.3 L834.4 795.1 L841.0 795.1" fill="none" stroke="#108684" stroke-width="1.3" stroke-linejoin="miter"/></svg></div>
<div class="inp" style="left:844.5px;top:738.3000000000001px;width:57.5px;height:16px"></div>
<span class="t" style="left:849.60px;top:739px;font-size:10px;letter-spacing:-0.508px;word-spacing:1.016px;color:#000;">200.0</span>
<div class="chk" style="left:867px;top:759.0px;width:11px;height:12px"></div>
<div class="val" style="left:843.5px;top:775.0px;width:57px;height:17px"></div>
<span class="t" style="left:848.20px;top:776px;font-size:10px;letter-spacing:-0.562px;word-spacing:1.125px;color:#000;">107.1 W</span>
<div class="btn" style="left:844px;top:809.0px;width:27px;height:20px"></div>
<span class="t" style="left:847.50px;top:811px;font-size:10px;letter-spacing:-0.445px;word-spacing:0.891px;color:#000;">Fit y</span>
<div class="btn" style="left:873px;top:809.0px;width:28px;height:20px"></div>
<span class="t" style="left:875.70px;top:811px;font-size:10px;letter-spacing:-1.031px;word-spacing:2.062px;color:#000;">Reset</span>
<div class="inp" style="left:844.5px;top:840.0px;width:57.5px;height:16.3px"></div>
<span class="t" style="left:849.60px;top:841px;font-size:10px;letter-spacing:-0.453px;word-spacing:0.906px;color:#000;">0.0</span>
<div class="win" style="left:3px;top:711px;width:448px;height:182px"><div class="tb"></div><div class="hl"></div></div>
<div class="cli" style="left:11px;top:737px;width:432px;height:148px"></div>
<span class="t" style="left:11.60px;top:720px;font-size:12px;letter-spacing:-0.655px;word-spacing:1.309px;color:#3e3d4e;">GPU1 VRM Power Out (POUT)</span>
<div class="cb" style="left:428px;top:721px"><svg width="11" height="11" viewBox="1 1 11 11"><use href="#xx"/></svg></div>
<div class="gr" style="left:11px;top:737.5px;width:362px;height:119px"><svg width="360" height="117" viewBox="12 738.5 360 117" style="position:absolute;left:0;top:0"><path d="M36.1 786.6 L39.5 786.6 L39.5 785.5 L44.4 785.5 L44.4 841.2 L51.8 841.2 L51.8 786.6 L60.7 786.6 L60.7 785.5 L71.7 785.5 L71.7 786.6 L74.2 786.6 L74.2 790.2 L78.7 790.2 L78.7 786.6 L87.0 786.6 L87.0 785.5 L89.7 785.5 L89.7 839.0 L93.6 839.0 L93.6 785.5 L95.4 785.5 L95.4 787.3 L98.6 787.3 L98.6 840.3 L101.0 840.3 L101.0 841.2 L105.4 841.2 L105.4 786.6 L117.3 786.6 L117.3 785.5 L119.2 785.5 L119.2 787.3 L123.0 787.3 L123.0 785.5 L127.5 785.5 L127.5 786.6 L132.0 786.6 L132.0 785.5 L137.2 785.5 L137.2 786.6 L140.4 786.6 L140.4 787.3 L144.2 787.3 L144.2 785.5 L149.4 785.5 L149.4 787.3 L153.2 787.3 L153.2 785.5 L155.0 785.5 L155.0 786.6 L159.7 786.6 L159.7 785.5 L164.2 785.5 L164.2 786.6 L171.2 786.6 L171.2 785.5 L175.7 785.5 L175.7 786.6 L183.4 786.6 L183.4 785.5 L190.0 785.5 L190.0 786.6 L196.0 786.6 L196.0 787.3 L200.5 787.3 L200.5 800.0 L204.4 800.0 L204.4 785.5 L206.7 785.5 L206.7 788.5 L209.3 788.5 L209.3 841.2 L213.5 841.2 L213.5 787.8 L216.0 787.8 L216.0 786.6 L224.0 786.6 L224.0 788.0 L228.0 788.0 L228.0 786.0 L236.0 786.0 L236.0 789.5 L240.0 789.5 L240.0 786.6 L246.0 786.6 L246.0 788.0 L248.5 788.0 L248.5 789.0 L257.5 789.0 L257.5 790.2 L261.5 790.2 L261.5 788.3 L267.0 788.3 L267.0 790.2 L269.9 790.2 L269.9 841.2 L273.5 841.2 L273.5 791.0 L276.7 791.0 L276.7 786.6 L279.0 786.6 L279.0 788.5 L282.0 788.5 L282.0 787.3 L287.0 787.3 L287.0 789.5 L291.5 789.5 L291.5 785.5 L294.0 785.5 L294.0 788.5 L298.0 788.5 L298.0 787.5 L301.0 787.5 L301.0 786.6 L306.0 786.6 L306.0 787.5 L309.5 787.5 L309.5 785.5 L322.0 785.5 L322.0 786.6 L326.0 786.6 L326.0 787.5 L329.7 787.5 L329.7 790.2 L333.3 790.2 L333.3 785.5 L337.0 785.5 L337.0 787.0 L339.0 787.0 L339.0 789.5 L348.0 789.5 L348.0 788.5 L351.0 788.5 L351.0 785.5 L354.0 785.5 L354.0 789.5 L357.5 789.5 L357.5 788.5 L360.5 788.5 L360.5 786.3 L373.0 786.3 L373.0 856.5 L36.1 856.5 Z" fill="#b2aef0"/><path d="M21.5 738.5V855.5M41.5 738.5V855.5M61.5 738.5V855.5M81.5 738.5V855.5M101.5 738.5V855.5M121.5 738.5V855.5M141.5 738.5V855.5M161.5 738.5V855.5M181.5 738.5V855.5M201.5 738.5V855.5M221.5 738.5V855.5M241.5 738.5V855.5M261.5 738.5V855.5M281.5 738.5V855.5M302.5 738.5V855.5M322.5 738.5V855.5M342.5 738.5V855.5M362.5 738.5V855.5M12 755.5H372M12 775.5H372M12 795.5H372M12 815.5H372M12 835.5H372M12 855.5H372" stroke="#a7c3ee" stroke-width="1" fill="none" shape-rendering="crispEdges"/><path d="M36.1 786.6 L39.5 786.6 L39.5 785.5 L44.4 785.5 L44.4 841.2 L51.8 841.2 L51.8 786.6 L60.7 786.6 L60.7 785.5 L71.7 785.5 L71.7 786.6 L74.2 786.6 L74.2 790.2 L78.7 790.2 L78.7 786.6 L87.0 786.6 L87.0 785.5 L89.7 785.5 L89.7 839.0 L93.6 839.0 L93.6 785.5 L95.4 785.5 L95.4 787.3 L98.6 787.3 L98.6 840.3 L101.0 840.3 L101.0 841.2 L105.4 841.2 L105.4 786.6 L117.3 786.6 L117.3 785.5 L119.2 785.5 L119.2 787.3 L123.0 787.3 L123.0 785.5 L127.5 785.5 L127.5 786.6 L132.0 786.6 L132.0 785.5 L137.2 785.5 L137.2 786.6 L140.4 786.6 L140.4 787.3 L144.2 787.3 L144.2 785.5 L149.4 785.5 L149.4 787.3 L153.2 787.3 L153.2 785.5 L155.0 785.5 L155.0 786.6 L159.7 786.6 L159.7 785.5 L164.2 785.5 L164.2 786.6 L171.2 786.6 L171.2 785.5 L175.7 785.5 L175.7 786.6 L183.4 786.6 L183.4 785.5 L190.0 785.5 L190.0 786.6 L196.0 786.6 L196.0 787.3 L200.5 787.3 L200.5 800.0 L204.4 800.0 L204.4 785.5 L206.7 785.5 L206.7 788.5 L209.3 788.5 L209.3 841.2 L213.5 841.2 L213.5 787.8 L216.0 787.8 L216.0 786.6 L224.0 786.6 L224.0 788.0 L228.0 788.0 L228.0 786.0 L236.0 786.0 L236.0 789.5 L240.0 789.5 L240.0 786.6 L246.0 786.6 L246.0 788.0 L248.5 788.0 L248.5 789.0 L257.5 789.0 L257.5 790.2 L261.5 790.2 L261.5 788.3 L267.0 788.3 L267.0 790.2 L269.9 790.2 L269.9 841.2 L273.5 841.2 L273.5 791.0 L276.7 791.0 L276.7 786.6 L279.0 786.6 L279.0 788.5 L282.0 788.5 L282.0 787.3 L287.0 787.3 L287.0 789.5 L291.5 789.5 L291.5 785.5 L294.0 785.5 L294.0 788.5 L298.0 788.5 L298.0 787.5 L301.0 787.5 L301.0 786.6 L306.0 786.6 L306.0 787.5 L309.5 787.5 L309.5 785.5 L322.0 785.5 L322.0 786.6 L326.0 786.6 L326.0 787.5 L329.7 787.5 L329.7 790.2 L333.3 790.2 L333.3 785.5 L337.0 785.5 L337.0 787.0 L339.0 787.0 L339.0 789.5 L348.0 789.5 L348.0 788.5 L351.0 788.5 L351.0 785.5 L354.0 785.5 L354.0 789.5 L357.5 789.5 L357.5 788.5 L360.5 788.5 L360.5 786.3 L373.0 786.3" fill="none" stroke="#6f66c0" stroke-width="1.0" stroke-linejoin="miter"/></svg></div>
<div class="inp" style="left:376.5px;top:737.5px;width:57.5px;height:16px"></div>
<span class="t" style="left:381.60px;top:738px;font-size:10px;letter-spacing:-0.508px;word-spacing:1.016px;color:#000;">200.0</span>
<div class="chk" style="left:399px;top:758.9px;width:11px;height:12px"></div>
<div class="val" style="left:375.5px;top:775.0px;width:57px;height:17px"></div>
<span class="t" style="left:380.20px;top:776px;font-size:10px;letter-spacing:-0.375px;word-spacing:0.750px;color:#000;">119.3 W</span>
<div class="btn" style="left:376px;top:809.0px;width:27px;height:20px"></div>
<span class="t" style="left:379.50px;top:811px;font-size:10px;letter-spacing:-0.445px;word-spacing:0.891px;color:#000;">Fit y</span>
<div class="btn" style="left:405px;top:809.0px;width:28px;height:20px"></div>
<span class="t" style="left:407.70px;top:811px;font-size:10px;letter-spacing:-1.031px;word-spacing:2.062px;color:#000;">Reset</span>
<div class="inp" style="left:376.5px;top:840.0px;width:57.5px;height:16.3px"></div>
<span class="t" style="left:381.60px;top:841px;font-size:10px;letter-spacing:-0.453px;word-spacing:0.906px;color:#000;">0.0</span>
<span class="wm" style="left:623.9px;top:429px;font-size:32px;line-height:37px;letter-spacing:-.69px;color:rgba(255,255,255,0.27);-webkit-text-stroke:.7px rgba(255,255,255,0.15);text-shadow:2.5px 2px 0 rgba(0,0,0,0.25)">programy.net<span style="color:rgba(95,160,245,0.49);-webkit-text-stroke:.7px rgba(95,160,245,0.27)">.pl</span></span>
<div class="win" style="left:919px;top:0px;width:519px;height:899px;background:#b9d1ea;border-color:#33373f"><div class="tb" style="background:linear-gradient(180deg,#98b4d6 0,#a6c0de 45%,#b9d1ea 100%)"></div><div class="hl" style="border-color:#fdfeff;border-right-color:#74e1fb;border-bottom-color:#c9e6f7"></div></div>
<div class="cli" style="left:927px;top:26px;width:503px;height:867px"></div>
<span class="t" style="left:927.40px;top:9px;font-size:12px;letter-spacing:-0.337px;word-spacing:0.674px;color:#000;">HWiNFO64 Sensor Status [35 value(s) hidden]</span>
<div class="a" style="left:927px;top:26px;width:495px;height:787px;border:1px solid #828790;background:#fff"></div>
<div class="a" style="left:929px;top:37px;width:474px;height:13px;background:linear-gradient(180deg,#ffffff 0,#f7f8fa 50%,#f1f2f5 100%)"></div>
<div class="a" style="left:929px;top:50px;width:474px;height:1px;background:#d5d5d5"></div>
<div class="a" style="left:1155px;top:28px;width:1px;height:22px;background:linear-gradient(180deg,#fff,#dfe2e8 50%,#dcdfe5)"></div>
<div class="a" style="left:1235px;top:28px;width:1px;height:22px;background:linear-gradient(180deg,#fff,#dfe2e8 50%,#dcdfe5)"></div>
<div class="a" style="left:1315px;top:28px;width:1px;height:22px;background:linear-gradient(180deg,#fff,#dfe2e8 50%,#dcdfe5)"></div>
<div class="a" style="left:1395px;top:28px;width:1px;height:22px;background:linear-gradient(180deg,#fff,#dfe2e8 50%,#dcdfe5)"></div>
<span class="t" style="left:934.60px;top:32px;font-size:11px;letter-spacing:-0.372px;word-spacing:0.744px;color:#000;">Sensor</span>
<span class="t" style="left:1192.60px;top:32px;font-size:11px;letter-spacing:0.052px;word-spacing:-0.104px;color:#000;">Current</span>
<span class="t" style="left:1269.30px;top:32px;font-size:11px;letter-spacing:-0.771px;word-spacing:1.542px;color:#000;">Minimum</span>
<span class="t" style="left:1345.30px;top:32px;font-size:11px;letter-spacing:-0.612px;word-spacing:1.224px;color:#000;">Maximum</span>
<div class="a" style="left:929px;top:68px;width:474px;height:1px;background:#f0f0f0"></div>
<div class="a" style="left:929px;top:85px;width:474px;height:1px;background:#f0f0f0"></div>
<div class="a" style="left:929px;top:102px;width:474px;height:1px;background:#f0f0f0"></div>
<div class="a" style="left:929px;top:119px;width:474px;height:1px;background:#f0f0f0"></div>
<div class="a" style="left:929px;top:136px;width:474px;height:1px;background:#f0f0f0"></div>
<div class="a" style="left:929px;top:153px;width:474px;height:1px;background:#f0f0f0"></div>
<div class="a" style="left:929px;top:170px;width:474px;height:1px;background:#f0f0f0"></div>
<div class="a" style="left:929px;top:187px;width:474px;height:1px;background:#f0f0f0"></div>
<div class="a" style="left:929px;top:204px;width:474px;height:1px;background:#f0f0f0"></div>
<div class="a" style="left:929px;top:221px;width:474px;height:1px;background:#f0f0f0"></div>
<div class="a" style="left:929px;top:238px;width:474px;height:1px;background:#f0f0f0"></div>
<div class="a" style="left:929px;top:255px;width:474px;height:1px;background:#f0f0f0"></div>
<div class="a" style="left:929px;top:272px;width:474px;height:1px;background:#f0f0f0"></div>
<div class="a" style="left:929px;top:289px;width:474px;height:1px;background:#f0f0f0"></div>
<div class="a" style="left:929px;top:306px;width:474px;height:1px;background:#f0f0f0"></div>
<div class="a" style="left:929px;top:323px;width:474px;height:1px;background:#f0f0f0"></div>
<div class="a" style="left:929px;top:340px;width:474px;height:1px;background:#f0f0f0"></div>
<div class="a" style="left:929px;top:357px;width:474px;height:1px;background:#f0f0f0"></div>
<div class="a" style="left:929px;top:374px;width:474px;height:1px;background:#f0f0f0"></div>
<div class="a" style="left:929px;top:391px;width:474px;height:1px;background:#f0f0f0"></div>
<div class="a" style="left:929px;top:408px;width:474px;height:1px;background:#f0f0f0"></div>
<div class="a" style="left:929px;top:425px;width:474px;height:1px;background:#f0f0f0"></div>
<div class="a" style="left:929px;top:442px;width:474px;height:1px;background:#f0f0f0"></div>
<div class="a" style="left:929px;top:459px;width:474px;height:1px;background:#f0f0f0"></div>
<div class="a" style="left:929px;top:476px;width:474px;height:1px;background:#f0f0f0"></div>
<div class="a" style="left:929px;top:493px;width:474px;height:1px;background:#f0f0f0"></div>
<div class="a" style="left:929px;top:510px;width:474px;height:1px;background:#f0f0f0"></div>
<div class="a" style="left:929px;top:527px;width:474px;height:1px;background:#f0f0f0"></div>
<div class="a" style="left:929px;top:544px;width:474px;height:1px;background:#f0f0f0"></div>
<div class="a" style="left:929px;top:561px;width:474px;height:1px;background:#f0f0f0"></div>
<div class="a" style="left:929px;top:578px;width:474px;height:1px;background:#f0f0f0"></div>
<div class="a" style="left:929px;top:595px;width:474px;height:1px;background:#f0f0f0"></div>
<div class="a" style="left:929px;top:612px;width:474px;height:1px;background:#f0f0f0"></div>
<div class="a" style="left:929px;top:629px;width:474px;height:1px;background:#f0f0f0"></div>
<div class="a" style="left:929px;top:646px;width:474px;height:1px;background:#f0f0f0"></div>
<div class="a" style="left:929px;top:663px;width:474px;height:1px;background:#f0f0f0"></div>
<div class="a" style="left:929px;top:680px;width:474px;height:1px;background:#f0f0f0"></div>
<div class="a" style="left:929px;top:697px;width:474px;height:1px;background:#f0f0f0"></div>
<div class="a" style="left:929px;top:714px;width:474px;height:1px;background:#f0f0f0"></div>
<div class="a" style="left:929px;top:731px;width:474px;height:1px;background:#f0f0f0"></div>
<div class="a" style="left:929px;top:748px;width:474px;height:1px;background:#f0f0f0"></div>
<div class="a" style="left:929px;top:765px;width:474px;height:1px;background:#f0f0f0"></div>
<div class="a" style="left:929px;top:782px;width:474px;height:1px;background:#f0f0f0"></div>
<div class="a" style="left:1156px;top:52px;width:1px;height:743px;background:#f0f0f0"></div>
<div class="a" style="left:1236px;top:52px;width:1px;height:743px;background:#f0f0f0"></div>
<div class="a" style="left:1316px;top:52px;width:1px;height:743px;background:#f0f0f0"></div>
<div class="a" style="left:1396px;top:52px;width:1px;height:743px;background:#f0f0f0"></div>
<svg class="a" style="left:936px;top:52.0px" width="10" height="16"><use href="#bolt"/></svg>
<span class="t" style="left:950.60px;top:53px;font-size:11px;letter-spacing:-0.031px;word-spacing:0.062px;color:#000;">Current (IOUT)</span>
<span class="t" style="left:1192.40px;top:53px;font-size:11px;letter-spacing:-0.082px;word-spacing:0.164px;color:#000;">9.750 A</span>
<span class="t" style="left:1272.30px;top:53px;font-size:11px;letter-spacing:-0.082px;word-spacing:0.164px;color:#000;">8.750 A</span>
<span class="t" style="left:1346.30px;top:53px;font-size:11px;letter-spacing:-0.087px;word-spacing:0.175px;color:#000;">10.000 A</span>
<svg class="a" style="left:936px;top:69.0px" width="10" height="16"><use href="#bolt"/></svg>
<span class="t" style="left:950.60px;top:70px;font-size:11px;letter-spacing:-0.458px;word-spacing:0.917px;color:#000;">Power (POUT)</span>
<span class="t" style="left:1183.40px;top:70px;font-size:11px;letter-spacing:-0.056px;word-spacing:0.113px;color:#000;">11.703 W</span>
<span class="t" style="left:1263.30px;top:70px;font-size:11px;letter-spacing:-0.219px;word-spacing:0.438px;color:#000;">10.500 W</span>
<span class="t" style="left:1343.30px;top:70px;font-size:11px;letter-spacing:-0.219px;word-spacing:0.438px;color:#000;">12.000 W</span>
<svg class="a" style="left:936px;top:86.0px" width="10" height="16"><use href="#bolt"/></svg>
<span class="t" style="left:950.60px;top:87px;font-size:11px;letter-spacing:0.097px;word-spacing:-0.194px;color:#000;">Power (Input)</span>
<span class="t" style="left:1183.40px;top:87px;font-size:11px;letter-spacing:-0.219px;word-spacing:0.438px;color:#000;">13.438 W</span>
<span class="t" style="left:1263.30px;top:87px;font-size:11px;letter-spacing:-0.056px;word-spacing:0.113px;color:#000;">11.953 W</span>
<span class="t" style="left:1343.30px;top:87px;font-size:11px;letter-spacing:-0.219px;word-spacing:0.438px;color:#000;">13.828 W</span>
<svg class="a" style="left:933.8px;top:121.2px" width="15" height="13.2"><use href="#chip"/></svg>
<span class="t" style="left:950.60px;top:121px;font-size:11px;letter-spacing:-0.007px;word-spacing:0.014px;color:#000;">S.M.A.R.T.</span>
<svg class="a" style="left:936px;top:137.4px" width="9.4" height="15.2"><use href="#therm"/></svg>
<span class="t" style="left:950.60px;top:138px;font-size:11px;letter-spacing:-0.431px;word-spacing:0.863px;color:#000;">ST1000DM003-9YN162 [S1D7H3TB]</span>
<span class="t" style="left:1193.40px;top:138px;font-size:11px;letter-spacing:-0.203px;word-spacing:0.406px;color:#000;">31.0 °C</span>
<span class="t" style="left:1273.30px;top:138px;font-size:11px;letter-spacing:-0.203px;word-spacing:0.406px;color:#000;">31.0 °C</span>
<span class="t" style="left:1353.30px;top:138px;font-size:11px;letter-spacing:-0.203px;word-spacing:0.406px;color:#000;">31.0 °C</span>
<svg class="a" style="left:934px;top:155.6px" width="13.2" height="13.2"><use href="#gauge"/></svg>
<span class="t" style="left:950.60px;top:155px;font-size:11px;letter-spacing:-0.494px;word-spacing:0.987px;color:#000;">ST1000DM003-9YN162 [S1D7H3TB] Dri…</span>
<span class="t" style="left:1216.40px;top:155px;font-size:11px;letter-spacing:-1.062px;word-spacing:2.125px;color:#000;">No</span>
<span class="t" style="left:1296.30px;top:155px;font-size:11px;letter-spacing:-1.062px;word-spacing:2.125px;color:#000;">No</span>
<span class="t" style="left:1376.30px;top:155px;font-size:11px;letter-spacing:-1.062px;word-spacing:2.125px;color:#000;">No</span>
<svg class="a" style="left:933.8px;top:189.2px" width="15" height="13.2"><use href="#chip"/></svg>
<span class="t" style="left:950.60px;top:189px;font-size:11px;letter-spacing:-0.214px;word-spacing:0.429px;color:#000;">GPU [#0]: ATI/AMD Radeon HD 7950: …</span>
<svg class="a" style="left:936px;top:205.4px" width="9.4" height="15.2"><use href="#therm"/></svg>
<span class="t" style="left:950.60px;top:206px;font-size:11px;letter-spacing:-0.612px;word-spacing:1.224px;color:#000;">GPU1 Thermal Diode</span>
<span class="t" style="left:1193.40px;top:206px;font-size:11px;letter-spacing:-0.203px;word-spacing:0.406px;color:#000;">66.0 °C</span>
<span class="t" style="left:1273.30px;top:206px;font-size:11px;letter-spacing:-0.203px;word-spacing:0.406px;color:#000;">61.0 °C</span>
<span class="t" style="left:1353.30px;top:206px;font-size:11px;letter-spacing:-0.203px;word-spacing:0.406px;color:#000;">67.0 °C</span>
<svg class="a" style="left:936px;top:222.0px" width="10" height="16"><use href="#bolt"/></svg>
<span class="t" style="left:950.60px;top:223px;font-size:11px;letter-spacing:-1.613px;word-spacing:3.225px;color:#000;">GPU VDDC</span>
<span class="t" style="left:1193.40px;top:223px;font-size:11px;letter-spacing:-0.480px;word-spacing:0.961px;color:#000;">1.250 V</span>
<span class="t" style="left:1273.30px;top:223px;font-size:11px;letter-spacing:-0.480px;word-spacing:0.961px;color:#000;">1.250 V</span>
<span class="t" style="left:1353.30px;top:223px;font-size:11px;letter-spacing:-0.480px;word-spacing:0.961px;color:#000;">1.250 V</span>
<svg class="a" style="left:934px;top:240.0px" width="14" height="14"><use href="#fan"/></svg>
<span class="t" style="left:950.60px;top:240px;font-size:11px;letter-spacing:-0.994px;word-spacing:1.988px;color:#000;">GPU1 Fan</span>
<span class="t" style="left:1181.40px;top:240px;font-size:11px;letter-spacing:-0.797px;word-spacing:1.594px;color:#000;">2198 RPM</span>
<span class="t" style="left:1261.30px;top:240px;font-size:11px;letter-spacing:-0.797px;word-spacing:1.594px;color:#000;">1959 RPM</span>
<span class="t" style="left:1341.30px;top:240px;font-size:11px;letter-spacing:-0.797px;word-spacing:1.594px;color:#000;">2302 RPM</span>
<svg class="a" style="left:934px;top:257.6px" width="13.2" height="13.2"><use href="#gauge"/></svg>
<span class="t" style="left:950.60px;top:257px;font-size:11px;letter-spacing:-0.933px;word-spacing:1.866px;color:#000;">GPU1 Clock</span>
<span class="t" style="left:1173.40px;top:257px;font-size:11px;letter-spacing:-0.357px;word-spacing:0.714px;color:#000;">1100.0 MHz</span>
<span class="t" style="left:1253.30px;top:257px;font-size:11px;letter-spacing:-0.357px;word-spacing:0.714px;color:#000;">1100.0 MHz</span>
<span class="t" style="left:1333.30px;top:257px;font-size:11px;letter-spacing:-0.357px;word-spacing:0.714px;color:#000;">1100.0 MHz</span>
<svg class="a" style="left:934px;top:274.6px" width="13.2" height="13.2"><use href="#gauge"/></svg>
<span class="t" style="left:950.60px;top:274px;font-size:11px;letter-spacing:-0.691px;word-spacing:1.383px;color:#000;">GPU1 Memory Clock</span>
<span class="t" style="left:1173.40px;top:274px;font-size:11px;letter-spacing:-0.473px;word-spacing:0.946px;color:#000;">1250.0 MHz</span>
<span class="t" style="left:1253.30px;top:274px;font-size:11px;letter-spacing:-0.473px;word-spacing:0.946px;color:#000;">1250.0 MHz</span>
<span class="t" style="left:1333.30px;top:274px;font-size:11px;letter-spacing:-0.473px;word-spacing:0.946px;color:#000;">1250.0 MHz</span>
<svg class="a" style="left:934px;top:291.6px" width="13.2" height="13.2"><use href="#gauge"/></svg>
<span class="t" style="left:950.60px;top:291px;font-size:11px;letter-spacing:-0.439px;word-spacing:0.877px;color:#000;">GPU1 Utilization</span>
<span class="t" style="left:1194.40px;top:291px;font-size:11px;letter-spacing:0.250px;word-spacing:-0.500px;color:#000;">99.0 %</span>
<span class="t" style="left:1274.30px;top:291px;font-size:11px;letter-spacing:0.250px;word-spacing:-0.500px;color:#000;">35.0 %</span>
<span class="t" style="left:1354.30px;top:291px;font-size:11px;letter-spacing:0.250px;word-spacing:-0.500px;color:#000;">99.0 %</span>
<svg class="a" style="left:934px;top:308.6px" width="13.2" height="13.2"><use href="#gauge"/></svg>
<span class="t" style="left:950.60px;top:308px;font-size:11px;letter-spacing:-0.971px;word-spacing:1.941px;color:#000;">GPU D3D Usage</span>
<span class="t" style="left:1200.40px;top:308px;font-size:11px;letter-spacing:0.430px;word-spacing:-0.859px;color:#000;">0.0 %</span>
<span class="t" style="left:1280.30px;top:308px;font-size:11px;letter-spacing:0.430px;word-spacing:-0.859px;color:#000;">0.0 %</span>
<span class="t" style="left:1360.30px;top:308px;font-size:11px;letter-spacing:0.430px;word-spacing:-0.859px;color:#000;">0.0 %</span>
<svg class="a" style="left:934px;top:325.6px" width="13.2" height="13.2"><use href="#gauge"/></svg>
<span class="t" style="left:950.60px;top:325px;font-size:11px;letter-spacing:-0.760px;word-spacing:1.521px;color:#000;">GPU1 Fan Speed</span>
<span class="t" style="left:1194.40px;top:325px;font-size:11px;letter-spacing:0.250px;word-spacing:-0.500px;color:#000;">47.0 %</span>
<span class="t" style="left:1274.30px;top:325px;font-size:11px;letter-spacing:0.250px;word-spacing:-0.500px;color:#000;">41.0 %</span>
<span class="t" style="left:1354.30px;top:325px;font-size:11px;letter-spacing:0.250px;word-spacing:-0.500px;color:#000;">48.0 %</span>
<svg class="a" style="left:934px;top:342.6px" width="13.2" height="13.2"><use href="#gauge"/></svg>
<span class="t" style="left:950.60px;top:342px;font-size:11px;letter-spacing:-0.546px;word-spacing:1.092px;color:#000;">GPU D3D Memory Dedicated</span>
<span class="t" style="left:1194.40px;top:342px;font-size:11px;letter-spacing:-0.974px;word-spacing:1.948px;color:#000;">182 MB</span>
<span class="t" style="left:1280.30px;top:342px;font-size:11px;letter-spacing:-1.398px;word-spacing:2.797px;color:#000;">53 MB</span>
<span class="t" style="left:1354.30px;top:342px;font-size:11px;letter-spacing:-0.974px;word-spacing:1.948px;color:#000;">308 MB</span>
<svg class="a" style="left:934px;top:359.6px" width="13.2" height="13.2"><use href="#gauge"/></svg>
<span class="t" style="left:950.60px;top:359px;font-size:11px;letter-spacing:-0.702px;word-spacing:1.404px;color:#000;">GPU D3D Memory Dynamic</span>
<span class="t" style="left:1194.40px;top:359px;font-size:11px;letter-spacing:-0.974px;word-spacing:1.948px;color:#000;">225 MB</span>
<span class="t" style="left:1274.30px;top:359px;font-size:11px;letter-spacing:-0.698px;word-spacing:1.396px;color:#000;">110 MB</span>
<span class="t" style="left:1354.30px;top:359px;font-size:11px;letter-spacing:-0.974px;word-spacing:1.948px;color:#000;">295 MB</span>
<svg class="a" style="left:934px;top:376.6px" width="13.2" height="13.2"><use href="#gauge"/></svg>
<span class="t" style="left:950.60px;top:376px;font-size:11px;letter-spacing:-0.556px;word-spacing:1.113px;color:#000;">PCIe Link Speed</span>
<span class="t" style="left:1175.40px;top:376px;font-size:11px;letter-spacing:-0.411px;word-spacing:0.821px;color:#000;">8.000 Gbps</span>
<span class="t" style="left:1255.30px;top:376px;font-size:11px;letter-spacing:-0.411px;word-spacing:0.821px;color:#000;">8.000 Gbps</span>
<span class="t" style="left:1335.30px;top:376px;font-size:11px;letter-spacing:-0.411px;word-spacing:0.821px;color:#000;">8.000 Gbps</span>
<svg class="a" style="left:933.8px;top:410.2px" width="15" height="13.2"><use href="#chip"/></svg>
<span class="t" style="left:950.60px;top:410px;font-size:11px;letter-spacing:-0.214px;word-spacing:0.429px;color:#000;">GPU [#0]: ATI/AMD Radeon HD 7950: …</span>
<svg class="a" style="left:936px;top:426.4px" width="9.4" height="15.2"><use href="#therm"/></svg>
<span class="t" style="left:950.60px;top:427px;font-size:11px;letter-spacing:-0.472px;word-spacing:0.944px;color:#000;">GPU VRM Temperature1</span>
<span class="t" style="left:1193.40px;top:427px;font-size:11px;letter-spacing:-0.203px;word-spacing:0.406px;color:#000;">73.0 °C</span>
<span class="t" style="left:1273.30px;top:427px;font-size:11px;letter-spacing:-0.203px;word-spacing:0.406px;color:#000;">69.0 °C</span>
<span class="t" style="left:1353.30px;top:427px;font-size:11px;letter-spacing:-0.203px;word-spacing:0.406px;color:#000;">74.0 °C</span>
<svg class="a" style="left:936px;top:443.0px" width="10" height="16"><use href="#bolt"/></svg>
<span class="t" style="left:950.60px;top:444px;font-size:11px;letter-spacing:-1.461px;word-spacing:2.922px;color:#000;">GPU1 VRM VDDC</span>
<span class="t" style="left:1193.40px;top:444px;font-size:11px;letter-spacing:-0.480px;word-spacing:0.961px;color:#000;">1.081 V</span>
<span class="t" style="left:1273.30px;top:444px;font-size:11px;letter-spacing:-0.480px;word-spacing:0.961px;color:#000;">1.079 V</span>
<span class="t" style="left:1353.30px;top:444px;font-size:11px;letter-spacing:-0.480px;word-spacing:0.961px;color:#000;">1.137 V</span>
<svg class="a" style="left:936px;top:460.0px" width="10" height="16"><use href="#bolt"/></svg>
<span class="t" style="left:950.60px;top:461px;font-size:11px;letter-spacing:-0.714px;word-spacing:1.428px;color:#000;">GPU1 VRM Power Out (POUT)</span>
<span class="t" style="left:1177.40px;top:461px;font-size:11px;letter-spacing:-0.065px;word-spacing:0.130px;color:#000;">119.250 W</span>
<span class="t" style="left:1263.30px;top:461px;font-size:11px;letter-spacing:-0.219px;word-spacing:0.438px;color:#000;">26.094 W</span>
<span class="t" style="left:1337.30px;top:461px;font-size:11px;letter-spacing:-0.201px;word-spacing:0.401px;color:#000;">121.250 W</span>
<svg class="a" style="left:933.8px;top:495.2px" width="15" height="13.2"><use href="#chip"/></svg>
<span class="t" style="left:950.60px;top:495px;font-size:11px;letter-spacing:-0.214px;word-spacing:0.429px;color:#000;">GPU [#1]: ATI/AMD Radeon HD 7950: …</span>
<svg class="a" style="left:936px;top:511.4px" width="9.4" height="15.2"><use href="#therm"/></svg>
<span class="t" style="left:950.60px;top:512px;font-size:11px;letter-spacing:-0.612px;word-spacing:1.224px;color:#000;">GPU2 Thermal Diode</span>
<span class="t" style="left:1193.40px;top:512px;font-size:11px;letter-spacing:-0.203px;word-spacing:0.406px;color:#000;">66.0 °C</span>
<span class="t" style="left:1273.30px;top:512px;font-size:11px;letter-spacing:-0.203px;word-spacing:0.406px;color:#000;">53.0 °C</span>
<span class="t" style="left:1353.30px;top:512px;font-size:11px;letter-spacing:-0.203px;word-spacing:0.406px;color:#000;">66.0 °C</span>
<svg class="a" style="left:936px;top:528.0px" width="10" height="16"><use href="#bolt"/></svg>
<span class="t" style="left:950.60px;top:529px;font-size:11px;letter-spacing:-1.613px;word-spacing:3.225px;color:#000;">GPU VDDC</span>
<span class="t" style="left:1193.40px;top:529px;font-size:11px;letter-spacing:-0.480px;word-spacing:0.961px;color:#000;">1.250 V</span>
<span class="t" style="left:1273.30px;top:529px;font-size:11px;letter-spacing:-0.480px;word-spacing:0.961px;color:#000;">0.950 V</span>
<span class="t" style="left:1353.30px;top:529px;font-size:11px;letter-spacing:-0.480px;word-spacing:0.961px;color:#000;">1.250 V</span>
<svg class="a" style="left:934px;top:546.0px" width="14" height="14"><use href="#fan"/></svg>
<span class="t" style="left:950.60px;top:546px;font-size:11px;letter-spacing:-0.994px;word-spacing:1.988px;color:#000;">GPU2 Fan</span>
<span class="t" style="left:1181.40px;top:546px;font-size:11px;letter-spacing:-0.797px;word-spacing:1.594px;color:#000;">2263 RPM</span>
<span class="t" style="left:1261.30px;top:546px;font-size:11px;letter-spacing:-0.797px;word-spacing:1.594px;color:#000;">1459 RPM</span>
<span class="t" style="left:1341.30px;top:546px;font-size:11px;letter-spacing:-0.797px;word-spacing:1.594px;color:#000;">2354 RPM</span>
<svg class="a" style="left:934px;top:563.6px" width="13.2" height="13.2"><use href="#gauge"/></svg>
<span class="t" style="left:950.60px;top:563px;font-size:11px;letter-spacing:-0.933px;word-spacing:1.866px;color:#000;">GPU2 Clock</span>
<span class="t" style="left:1173.40px;top:563px;font-size:11px;letter-spacing:-0.357px;word-spacing:0.714px;color:#000;">1100.0 MHz</span>
<span class="t" style="left:1259.30px;top:563px;font-size:11px;letter-spacing:-0.534px;word-spacing:1.068px;color:#000;">300.0 MHz</span>
<span class="t" style="left:1333.30px;top:563px;font-size:11px;letter-spacing:-0.357px;word-spacing:0.714px;color:#000;">1100.0 MHz</span>
<svg class="a" style="left:934px;top:580.6px" width="13.2" height="13.2"><use href="#gauge"/></svg>
<span class="t" style="left:950.60px;top:580px;font-size:11px;letter-spacing:-0.691px;word-spacing:1.383px;color:#000;">GPU2 Memory Clock</span>
<span class="t" style="left:1173.40px;top:580px;font-size:11px;letter-spacing:-0.473px;word-spacing:0.946px;color:#000;">1250.0 MHz</span>
<span class="t" style="left:1259.30px;top:580px;font-size:11px;letter-spacing:-0.534px;word-spacing:1.068px;color:#000;">150.0 MHz</span>
<span class="t" style="left:1333.30px;top:580px;font-size:11px;letter-spacing:-0.473px;word-spacing:0.946px;color:#000;">1250.0 MHz</span>
<svg class="a" style="left:934px;top:597.6px" width="13.2" height="13.2"><use href="#gauge"/></svg>
<span class="t" style="left:950.60px;top:597px;font-size:11px;letter-spacing:-0.439px;word-spacing:0.877px;color:#000;">GPU2 Utilization</span>
<span class="t" style="left:1194.40px;top:597px;font-size:11px;letter-spacing:0.250px;word-spacing:-0.500px;color:#000;">98.0 %</span>
<span class="t" style="left:1280.30px;top:597px;font-size:11px;letter-spacing:0.430px;word-spacing:-0.859px;color:#000;">0.0 %</span>
<span class="t" style="left:1354.30px;top:597px;font-size:11px;letter-spacing:0.250px;word-spacing:-0.500px;color:#000;">99.0 %</span>
<svg class="a" style="left:934px;top:614.6px" width="13.2" height="13.2"><use href="#gauge"/></svg>
<span class="t" style="left:950.60px;top:614px;font-size:11px;letter-spacing:-0.971px;word-spacing:1.941px;color:#000;">GPU D3D Usage</span>
<span class="t" style="left:1200.40px;top:614px;font-size:11px;letter-spacing:0.430px;word-spacing:-0.859px;color:#000;">0.1 %</span>
<span class="t" style="left:1280.30px;top:614px;font-size:11px;letter-spacing:0.430px;word-spacing:-0.859px;color:#000;">0.0 %</span>
<span class="t" style="left:1360.30px;top:614px;font-size:11px;letter-spacing:0.430px;word-spacing:-0.859px;color:#000;">0.9 %</span>
<svg class="a" style="left:934px;top:631.6px" width="13.2" height="13.2"><use href="#gauge"/></svg>
<span class="t" style="left:950.60px;top:631px;font-size:11px;letter-spacing:-0.760px;word-spacing:1.521px;color:#000;">GPU2 Fan Speed</span>
<span class="t" style="left:1194.40px;top:631px;font-size:11px;letter-spacing:0.250px;word-spacing:-0.500px;color:#000;">47.0 %</span>
<span class="t" style="left:1274.30px;top:631px;font-size:11px;letter-spacing:0.250px;word-spacing:-0.500px;color:#000;">33.0 %</span>
<span class="t" style="left:1354.30px;top:631px;font-size:11px;letter-spacing:0.250px;word-spacing:-0.500px;color:#000;">48.0 %</span>
<svg class="a" style="left:934px;top:648.6px" width="13.2" height="13.2"><use href="#gauge"/></svg>
<span class="t" style="left:950.60px;top:648px;font-size:11px;letter-spacing:-0.546px;word-spacing:1.092px;color:#000;">GPU D3D Memory Dedicated</span>
<span class="t" style="left:1194.40px;top:648px;font-size:11px;letter-spacing:-0.974px;word-spacing:1.948px;color:#000;">250 MB</span>
<span class="t" style="left:1280.30px;top:648px;font-size:11px;letter-spacing:-1.398px;word-spacing:2.797px;color:#000;">13 MB</span>
<span class="t" style="left:1354.30px;top:648px;font-size:11px;letter-spacing:-0.974px;word-spacing:1.948px;color:#000;">320 MB</span>
<svg class="a" style="left:934px;top:665.6px" width="13.2" height="13.2"><use href="#gauge"/></svg>
<span class="t" style="left:950.60px;top:665px;font-size:11px;letter-spacing:-0.702px;word-spacing:1.404px;color:#000;">GPU D3D Memory Dynamic</span>
<span class="t" style="left:1194.40px;top:665px;font-size:11px;letter-spacing:-0.974px;word-spacing:1.948px;color:#000;">233 MB</span>
<span class="t" style="left:1280.30px;top:665px;font-size:11px;letter-spacing:-1.398px;word-spacing:2.797px;color:#000;">17 MB</span>
<span class="t" style="left:1354.30px;top:665px;font-size:11px;letter-spacing:-0.974px;word-spacing:1.948px;color:#000;">303 MB</span>
<svg class="a" style="left:934px;top:682.6px" width="13.2" height="13.2"><use href="#gauge"/></svg>
<span class="t" style="left:950.60px;top:682px;font-size:11px;letter-spacing:-0.556px;word-spacing:1.113px;color:#000;">PCIe Link Speed</span>
<span class="t" style="left:1175.40px;top:682px;font-size:11px;letter-spacing:-0.411px;word-spacing:0.821px;color:#000;">8.000 Gbps</span>
<span class="t" style="left:1255.30px;top:682px;font-size:11px;letter-spacing:-0.411px;word-spacing:0.821px;color:#000;">2.500 Gbps</span>
<span class="t" style="left:1335.30px;top:682px;font-size:11px;letter-spacing:-0.411px;word-spacing:0.821px;color:#000;">8.000 Gbps</span>
<svg class="a" style="left:933.8px;top:716.2px" width="15" height="13.2"><use href="#chip"/></svg>
<span class="t" style="left:950.60px;top:716px;font-size:11px;letter-spacing:-0.214px;word-spacing:0.429px;color:#000;">GPU [#1]: ATI/AMD Radeon HD 7950: …</span>
<svg class="a" style="left:936px;top:732.4px" width="9.4" height="15.2"><use href="#therm"/></svg>
<span class="t" style="left:950.60px;top:733px;font-size:11px;letter-spacing:-0.472px;word-spacing:0.944px;color:#000;">GPU VRM Temperature1</span>
<span class="t" style="left:1193.40px;top:733px;font-size:11px;letter-spacing:-0.203px;word-spacing:0.406px;color:#000;">70.0 °C</span>
<span class="t" style="left:1273.30px;top:733px;font-size:11px;letter-spacing:-0.203px;word-spacing:0.406px;color:#000;">61.0 °C</span>
<span class="t" style="left:1353.30px;top:733px;font-size:11px;letter-spacing:-0.203px;word-spacing:0.406px;color:#000;">70.0 °C</span>
<div class="a" style="left:949px;top:749px;width:454px;height:16px;background:#3399ff;border:1px dotted #d89a5a"></div>
<div class="a" style="left:1156px;top:750px;width:1px;height:14px;background:#5aacff"></div>
<div class="a" style="left:1236px;top:750px;width:1px;height:14px;background:#5aacff"></div>
<div class="a" style="left:1316px;top:750px;width:1px;height:14px;background:#5aacff"></div>
<div class="a" style="left:1396px;top:750px;width:1px;height:14px;background:#5aacff"></div>
<svg class="a" style="left:936px;top:749.0px" width="10" height="16"><use href="#bolts"/></svg>
<span class="t" style="left:950.60px;top:750px;font-size:11px;letter-spacing:-1.461px;word-spacing:2.922px;color:#fff;-webkit-text-stroke:0;">GPU2 VRM VDDC</span>
<span class="t" style="left:1193.40px;top:750px;font-size:11px;letter-spacing:-0.480px;word-spacing:0.961px;color:#fff;-webkit-text-stroke:0;">1.088 V</span>
<span class="t" style="left:1273.30px;top:750px;font-size:11px;letter-spacing:-0.480px;word-spacing:0.961px;color:#fff;-webkit-text-stroke:0;">0.807 V</span>
<span class="t" style="left:1353.30px;top:750px;font-size:11px;letter-spacing:-0.480px;word-spacing:0.961px;color:#fff;-webkit-text-stroke:0;">1.144 V</span>
<svg class="a" style="left:936px;top:766.0px" width="10" height="16"><use href="#bolt"/></svg>
<span class="t" style="left:950.60px;top:767px;font-size:11px;letter-spacing:-0.714px;word-spacing:1.428px;color:#000;">GPU2 VRM Power Out (POUT)</span>
<span class="t" style="left:1177.40px;top:767px;font-size:11px;letter-spacing:-0.201px;word-spacing:0.401px;color:#000;">107.125 W</span>
<span class="t" style="left:1269.30px;top:767px;font-size:11px;letter-spacing:-0.242px;word-spacing:0.484px;color:#000;">0.375 W</span>
<span class="t" style="left:1337.30px;top:767px;font-size:11px;letter-spacing:-0.201px;word-spacing:0.401px;color:#000;">108.125 W</span>
<div class="a" style="left:1404px;top:27px;width:17px;height:768px;background:linear-gradient(90deg,#e4e4e4 0,#efefef 20%,#f3f3f3 100%)"></div>
<svg class="a" style="left:1404px;top:27px" width="17" height="17"><path d="M5 10.3 L8.4 6.6 L11.8 10.3 Z" fill="#3c3c3c"/></svg>
<svg class="a" style="left:1404px;top:778px" width="17" height="17"><path d="M5 6.8 L8.4 10.5 L11.8 6.8 Z" fill="#3c3c3c"/></svg>
<div class="a" style="left:1404px;top:499px;width:15px;height:277px;border:1px solid #979797;border-radius:3px;background:linear-gradient(90deg,#f6f6f6 0,#ebebeb 48%,#dadadc 52%,#c4c4c8 100%);box-shadow:inset 0 0 0 1px rgba(255,255,255,.7)"></div>
<svg class="a" style="left:1408px;top:632px" width="7" height="9"><path d="M0 .5H7M0 3.5H7M0 6.5H7" stroke="#5f5f5f" stroke-width="1"/><path d="M0 1.5H7M0 4.5H7M0 7.5H7" stroke="#fff" stroke-width="1"/></svg>
<div class="a" style="left:928px;top:795px;width:493px;height:17px;background:#f0f0f0"></div>
<div class="a" style="left:928px;top:795px;width:476px;height:17px;background:linear-gradient(180deg,#e4e4e4 0,#efefef 20%,#f3f3f3 100%)"></div>
<svg class="a" style="left:930px;top:795px" width="17" height="17"><path d="M9.4 4.9 L5.6 8.2 L9.4 11.5 Z" fill="#3c3c3c"/></svg>
<svg class="a" style="left:1386px;top:795px" width="17" height="17"><path d="M7.2 4.9 L11 8.2 L7.2 11.5 Z" fill="#3c3c3c"/></svg>
<div class="a" style="left:947px;top:796px;width:379px;height:15px;border:1px solid #979797;border-radius:3px;background:linear-gradient(180deg,#f6f6f6 0,#ebebeb 48%,#dadadc 52%,#c4c4c8 100%);box-shadow:inset 0 0 0 1px rgba(255,255,255,.7)"></div>
<svg class="a" style="left:1132px;top:800px" width="9" height="6"><path d="M.5 0V6M3.5 0V6M6.5 0V6" stroke="#5f5f5f" stroke-width="1"/><path d="M1.5 0V6M4.5 0V6M7.5 0V6" stroke="#fff" stroke-width="1"/></svg>
<div class="a" style="left:935px;top:827px;width:90px;height:51px;border:1px solid #d5dfe5;border-radius:3px;box-shadow:inset 0 0 0 1px #fcfcfc"></div>
<div class="a" style="left:941px;top:822px;width:66px;height:12px;background:#f0f0f0"></div>
<span class="t" style="left:943.80px;top:819px;font-size:11px;letter-spacing:0.023px;word-spacing:-0.047px;color:#000;">Temperature</span>
<svg class="a" style="left:941.3px;top:839.3px" width="13" height="13"><circle cx="6.5" cy="6.5" r="5.7" fill="#f4f4f4" stroke="#8e8f8f" stroke-width="1"/><circle cx="6.5" cy="6.5" r="4.2" fill="none" stroke="#c9cdd0" stroke-width="1"/><circle cx="6.5" cy="6.5" r="3.2" fill="#1d4f94"/><circle cx="6" cy="5.9" r="1.7" fill="#3f9fe0"/><circle cx="5.7" cy="5.5" r=".8" fill="#9fdcf8"/></svg>
<svg class="a" style="left:941.3px;top:855.4px" width="13" height="13"><circle cx="6.5" cy="6.5" r="5.7" fill="#f4f4f4" stroke="#8e8f8f" stroke-width="1"/><circle cx="6.5" cy="6.5" r="4.2" fill="none" stroke="#c9cdd0" stroke-width="1"/></svg>
<span class="t" style="left:957.70px;top:838px;font-size:11px;letter-spacing:-0.513px;word-spacing:1.026px;color:#000;">Celsius</span>
<span class="t" style="left:957.70px;top:854px;font-size:11px;letter-spacing:-0.066px;word-spacing:0.132px;color:#000;">Fahrenheit</span>
<div class="btn " style="left:1053px;top:830px;width:55px;height:39px"></div>
<span class="t" style="left:1066.50px;top:835px;font-size:11px;letter-spacing:-0.188px;word-spacing:0.375px;color:#000;">Reset</span>
<span class="t" style="left:1065.00px;top:848px;font-size:11px;letter-spacing:-0.366px;word-spacing:0.731px;color:#000;">Values</span>
<div class="btn " style="left:1144px;top:830px;width:55px;height:39px"></div>
<span class="t" style="left:1153.00px;top:835px;font-size:11px;letter-spacing:-0.359px;word-spacing:0.719px;color:#000;"><u>L</u>ogging</span>
<span class="t" style="left:1159.50px;top:848px;font-size:11px;letter-spacing:0.191px;word-spacing:-0.383px;color:#000;">Start</span>
<div class="btn " style="left:1222px;top:830px;width:55px;height:39px"></div>
<span class="t" style="left:1226.00px;top:842px;font-size:11px;letter-spacing:-0.088px;word-spacing:0.176px;color:#000;">C<u>o</u>nfigure</span>
<div class="btn " style="left:1287px;top:830px;width:55px;height:39px"></div>
<span class="t" style="left:1295.00px;top:835px;font-size:11px;letter-spacing:-0.629px;word-spacing:1.259px;color:#000;"><u>M</u>inimize</span>
<span class="t" style="left:1309.00px;top:848px;font-size:11px;letter-spacing:-0.617px;word-spacing:1.234px;color:#000;">All</span>
<div class="btn def" style="left:1354px;top:830px;width:58px;height:39px"></div>
<span class="t" style="left:1371.00px;top:835px;font-size:11px;letter-spacing:-0.359px;word-spacing:0.719px;color:#000;">Save</span>
<span class="t" style="left:1368.00px;top:848px;font-size:11px;letter-spacing:-0.193px;word-spacing:0.385px;color:#000;">&amp; <u>Q</u>uit</span>
<span class="t" style="left:1065.00px;top:869px;font-size:11px;letter-spacing:0.216px;word-spacing:-0.432px;color:#000;">0:13:18</span>
<span class="wm" style="left:1243.8px;top:-5px;font-size:32px;line-height:37px;letter-spacing:-.69px;color:rgba(255,255,255,0.27);-webkit-text-stroke:.7px rgba(255,255,255,0.15);text-shadow:2.5px 2px 0 rgba(0,0,0,0.25)">programy.net<span style="color:rgba(95,160,245,0.49);-webkit-text-stroke:.7px rgba(95,160,245,0.27)">.pl</span></span>
<div class="a" style="left:1415px;top:10px;width:13px;height:13px;border:1px solid #4e0f2a;border-radius:2px;background:linear-gradient(180deg,#e7a08f 0,#d46a55 45%,#c8381c 55%,#dd6a3a 100%);box-shadow:inset 0 0 0 1px rgba(255,220,210,.55)"><svg width="11" height="11" viewBox="1 1 11 11" style="position:absolute;left:0;top:0"><path d="M3.7 3.9 L9.3 9.3 M9.3 3.9 L3.7 9.3" stroke="#3d4a72" stroke-width="3.3" stroke-linecap="round"/><path d="M3.7 3.9 L9.3 9.3 M9.3 3.9 L3.7 9.3" stroke="#fff" stroke-width="1.8"/></svg></div>
<span class="wm" style="left:2.5px;top:860px;font-size:32px;line-height:37px;letter-spacing:-.69px;color:rgba(255,255,255,0.5);-webkit-text-stroke:.7px rgba(255,255,255,0.28);text-shadow:2.5px 2px 0 rgba(0,0,0,0.3)">programy.net<span style="color:rgba(95,160,245,0.72);-webkit-text-stroke:.7px rgba(95,160,245,0.40)">.pl</span></span>
<div class="a" style="left:1438px;top:0;width:2px;height:900px;background:linear-gradient(180deg,#0a3f9a,#05469f 40%,#0550b0 100%)"></div>
<div class="a" style="left:0;top:898px;width:1440px;height:1px;background:#45474b"></div><div class="a" style="left:0;top:899px;width:1440px;height:1px;background:#d4d8dd"></div>
<div class="a" style="left:0;top:898px;width:60px;height:2px;background:#8a949c"></div><div class="a" style="left:60px;top:899px;width:52px;height:1px;background:#fafafa"></div><div class="a" style="left:122px;top:899px;width:56px;height:1px;background:#fafafa"></div>
</body></html>
